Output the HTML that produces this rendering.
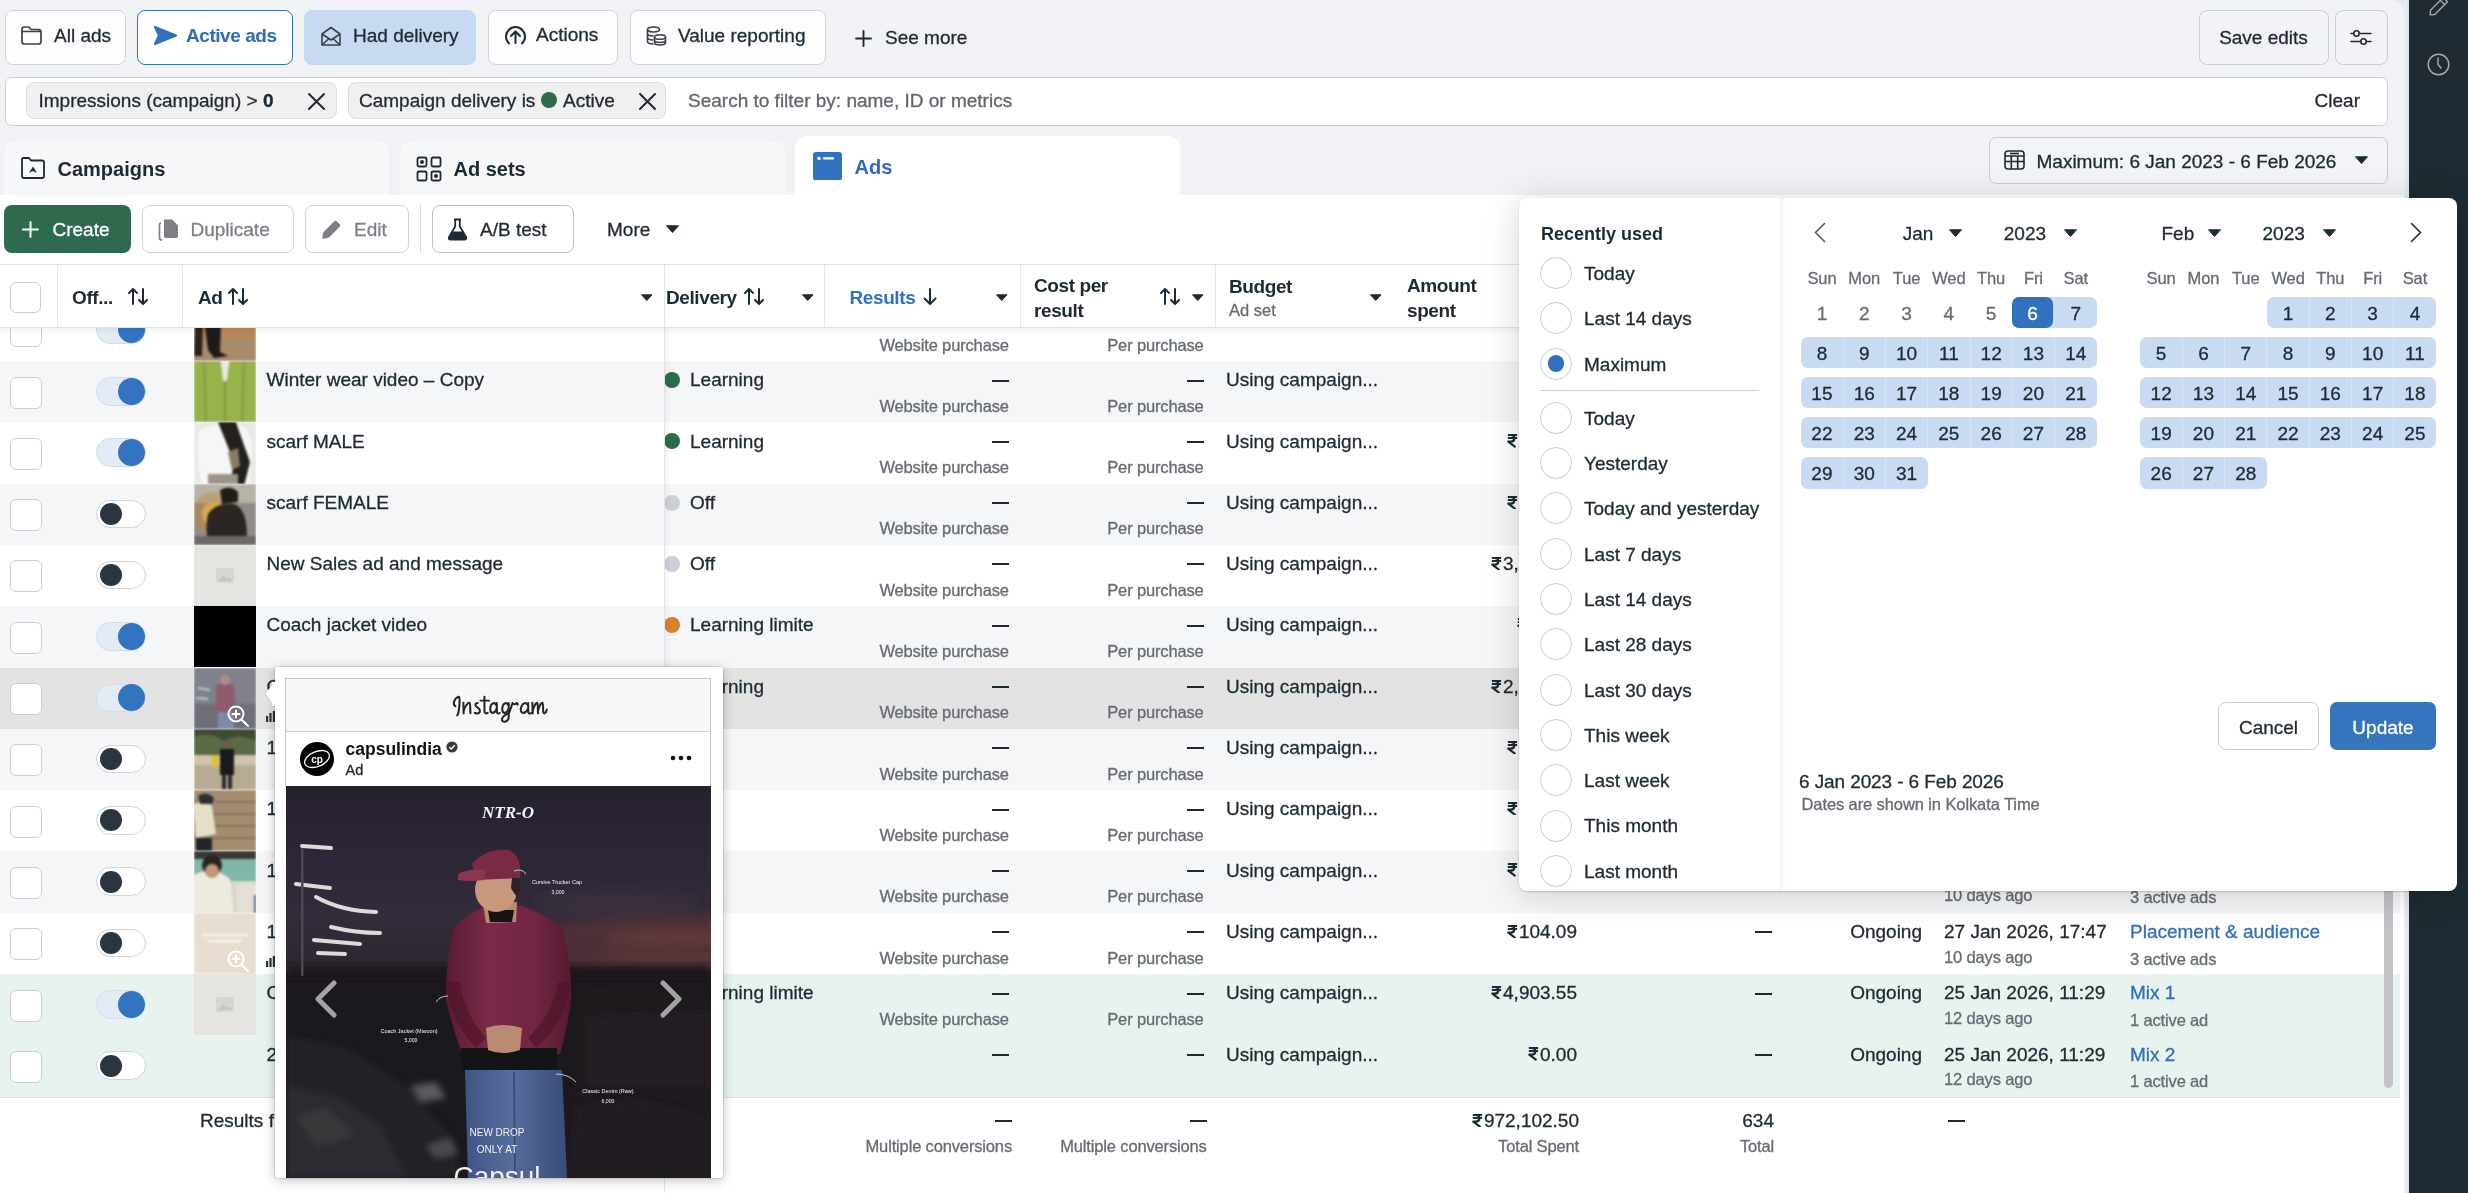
<!DOCTYPE html><html><head><meta charset="utf-8"><style>
*{box-sizing:border-box;margin:0;padding:0}
html,body{width:2468px;height:1193px;overflow:hidden}
body{position:relative;background:#f1f2f6;font-family:"Liberation Sans",sans-serif;color:#1c2b33}
.a{position:absolute}
.t{position:absolute;white-space:nowrap;-webkit-text-stroke:0.3px currentColor}
.btn{position:absolute;border:1px solid #cdd3da;border-radius:8px;background:#fff}
</style></head><body><div id="root" style="position:absolute;left:0;top:0;width:2468px;height:1193px;will-change:transform"><div class="btn" style="left:4.5px;top:10px;width:121px;height:55px;background:#fdfdfe"></div>
<svg class="a" style="left:20.00px;top:25.00px;" width="23" height="21" viewBox="0 0 23 21"><path d="M2 4.5 Q2 2 4.5 2 H9 L11 4.5 H18.5 Q21 4.5 21 7 V16.5 Q21 19 18.5 19 H4.5 Q2 19 2 16.5 Z M2 6.5 H21" fill="none" stroke="#37424a" stroke-width="1.7" stroke-linejoin="round"/></svg>
<div class="t" style="top:25.92px;font-size:19px;line-height:19px;color:#1c2b33;left:54.00px;">All ads</div>
<div class="btn" style="left:137px;top:10px;width:156px;height:55px;border:1.5px solid #3271bf;background:#fff"></div>
<svg class="a" style="left:153.00px;top:25.00px;" width="24" height="21" viewBox="0 0 24 21"><path d="M2 2 L23 10.5 L2 19 L6 10.5 Z" fill="#3271bf" stroke="#3271bf" stroke-width="2.2" stroke-linejoin="round"/></svg>
<div class="t" style="top:25.92px;font-size:19px;line-height:19px;color:#2f6cb8;font-weight:700;-webkit-text-stroke:0;letter-spacing:-0.45px;left:186.00px;">Active ads</div>
<div class="btn" style="left:304px;top:10px;width:172px;height:55px;background:#c7daf1;border-color:#c3d6ee"></div>
<svg class="a" style="left:320.00px;top:25.00px;" width="22" height="22" viewBox="0 0 22 22"><g fill="none" stroke="#37424a" stroke-width="1.6" stroke-linejoin="round"><path d="M2 9 L11 2.5 L20 9 V20 H2 Z"/><path d="M2 9 L11 15 L20 9 M2 20 L9 13.5 M20 20 L13 13.5"/></g></svg>
<div class="t" style="top:25.92px;font-size:19px;line-height:19px;color:#1c2b33;left:353.00px;">Had delivery</div>
<div class="btn" style="left:487.5px;top:10px;width:130px;height:55px;background:#fdfdfe"></div>
<svg class="a" style="left:503.00px;top:24.00px;" width="25" height="25" viewBox="0 0 25 25"><g fill="none" stroke="#1c2b33" stroke-width="2" stroke-linecap="round" stroke-linejoin="round"><path d="M6 19.5 A9.5 9.5 0 1 1 19 19.5"/><path d="M12.5 19 V7.5 M8 12 L12.5 7.5 L17 12"/></g></svg>
<div class="t" style="top:24.92px;font-size:19px;line-height:19px;color:#1c2b33;left:536.00px;">Actions</div>
<div class="btn" style="left:629.5px;top:10px;width:196px;height:55px;background:#fdfdfe"></div>
<svg class="a" style="left:646.00px;top:26.00px;" width="21" height="20" viewBox="0 0 21 20"><g fill="none" stroke="#37424a" stroke-width="1.6"><ellipse cx="7.5" cy="3.5" rx="6" ry="2.5"/><path d="M1.5 3.5 V15.5 Q1.5 18 7.5 18"/><path d="M1.5 7.5 Q1.5 10 7.5 10 M1.5 11.5 Q1.5 14 7.5 14"/><ellipse cx="14" cy="11" rx="5.5" ry="2.3"/><path d="M8.5 11 V16.5 Q8.5 19 14 19 Q19.5 19 19.5 16.5 V11 M8.5 14 Q8.5 16.5 14 16.5 Q19.5 16.5 19.5 14"/></g></svg>
<div class="t" style="top:25.92px;font-size:19px;line-height:19px;color:#1c2b33;left:678.00px;">Value reporting</div>
<svg class="a" style="left:854.00px;top:29.00px;" width="19" height="19" viewBox="0 0 19 19"><path d="M9.5 2 V17 M2 9.5 H17" stroke="#1c2b33" stroke-width="1.9" stroke-linecap="round"/></svg>
<div class="t" style="top:27.92px;font-size:19px;line-height:19px;color:#1c2b33;left:885.00px;">See more</div>
<div class="btn" style="left:2198.5px;top:10px;width:130px;height:55px;background:#f2f3f6;border-color:#c7ced6"></div>
<div class="t" style="top:27.92px;font-size:19px;line-height:19px;color:#1c2b33;left:1863.50px;width:800px;text-align:center;">Save edits</div>
<div class="btn" style="left:2335px;top:10px;width:53px;height:55px;background:#f2f3f6;border-color:#c7ced6"></div>
<svg class="a" style="left:2350.00px;top:29.00px;" width="22" height="17" viewBox="0 0 22 17"><g fill="none" stroke="#1c2b33" stroke-width="1.6" stroke-linecap="round"><path d="M1 4.5 H3 M10 4.5 H21"/><circle cx="6.5" cy="4.5" r="2.7"/><path d="M1 12.5 H10 M17 12.5 H21"/><circle cx="13.5" cy="12.5" r="2.7"/></g></svg>
<div class="a" style="left:4.5px;top:76.5px;width:2383px;height:49px;background:#fff;border:1px solid #c9ced6;border-radius:7px"></div>
<div class="a" style="left:26px;top:82px;width:310.5px;height:37px;background:#f0f0f1;border:1px solid #dadde1;border-radius:8px"></div>
<div class="t" style="top:91.22px;font-size:19px;line-height:19px;color:#1c2b33;left:38.50px;">Impressions (campaign) &gt; <b>0</b></div>
<svg class="a" style="left:307.00px;top:92.00px;" width="19" height="19" viewBox="0 0 19 19"><path d="M2 2 L17 17 M17 2 L2 17" stroke="#1c2b33" stroke-width="2" stroke-linecap="round"/></svg>
<div class="a" style="left:347.5px;top:82px;width:318px;height:37px;background:#f0f0f1;border:1px solid #dadde1;border-radius:8px"></div>
<div class="t" style="top:91.22px;font-size:19px;line-height:19px;color:#1c2b33;left:359.00px;">Campaign delivery is</div>
<div class="a" style="left:541.00px;top:92.00px;width:16.00px;height:16.00px;background:#2b6c4b;border-radius:50%"></div>
<div class="t" style="top:91.22px;font-size:19px;line-height:19px;color:#1c2b33;left:563.00px;">Active</div>
<svg class="a" style="left:637.50px;top:92.00px;" width="19" height="19" viewBox="0 0 19 19"><path d="M2 2 L17 17 M17 2 L2 17" stroke="#1c2b33" stroke-width="2" stroke-linecap="round"/></svg>
<div class="t" style="top:91.22px;font-size:19px;line-height:19px;color:#60676e;left:688.00px;">Search to filter by: name, ID or metrics</div>
<div class="t" style="top:91.22px;font-size:19px;line-height:19px;color:#1c2b33;left:1560.00px;width:800px;text-align:right;">Clear</div>
<div class="a" style="left:4px;top:141px;width:385px;height:60px;background:#f7f8fa;border-radius:12px 12px 0 0"></div>
<svg class="a" style="left:20.00px;top:156.00px;" width="26" height="24" viewBox="0 0 26 24"><g fill="none" stroke="#1c2b33" stroke-width="1.8" stroke-linejoin="round"><path d="M2 3.5 Q2 2 3.5 2 H9 L11 4.5 H22 Q24 4.5 24 6.5 V20 Q24 22 22 22 H4 Q2 22 2 20 Z"/></g><path d="M9 17 L13 10.5 L17 17 L13 15 Z" fill="#1c2b33"/></svg>
<div class="t" style="top:158.57px;font-size:20px;line-height:20px;color:#1c2b33;font-weight:700;-webkit-text-stroke:0;left:57.50px;">Campaigns</div>
<div class="a" style="left:400px;top:141px;width:385px;height:60px;background:#f7f8fa;border-radius:12px 12px 0 0"></div>
<svg class="a" style="left:416.00px;top:156.00px;" width="26" height="26" viewBox="0 0 26 26"><g fill="none" stroke="#1c2b33" stroke-width="1.8"><rect x="1.5" y="1.5" width="9" height="9" rx="1.5"/><rect x="15.5" y="1.5" width="9" height="9" rx="1.5"/><rect x="1.5" y="15.5" width="9" height="9" rx="1.5"/><rect x="15.5" y="15.5" width="9" height="9" rx="1.5"/></g><circle cx="6" cy="6" r="2" fill="#1c2b33"/><circle cx="20" cy="20" r="2" fill="#1c2b33"/></svg>
<div class="t" style="top:158.57px;font-size:20px;line-height:20px;color:#1c2b33;font-weight:700;-webkit-text-stroke:0;left:453.50px;">Ad sets</div>
<div class="a" style="left:795px;top:136px;width:385px;height:65px;background:#fff;border-radius:12px 12px 0 0"></div>
<svg class="a" style="left:812.50px;top:151.50px;" width="29" height="28.5" viewBox="0 0 29 28.5"><rect x="0" y="0" width="29" height="28.5" rx="3" fill="#3271bf"/><circle cx="6" cy="6.5" r="1.8" fill="#fff"/><rect x="10" y="5.2" width="11" height="2.4" rx="1" fill="#fff"/></svg>
<div class="t" style="top:156.57px;font-size:20px;line-height:20px;color:#2f6cb8;font-weight:700;-webkit-text-stroke:0;left:854.50px;">Ads</div>
<div class="a" style="left:1988.5px;top:136.5px;width:399px;height:47px;background:#f3f4f7;border:1px solid #c5ccd5;border-radius:7px"></div>
<svg class="a" style="left:2004.00px;top:150.00px;" width="21" height="20" viewBox="0 0 21 20"><g fill="none" stroke="#1c2b33" stroke-width="1.6"><rect x="1" y="1" width="19" height="18" rx="3"/><path d="M1 6 H20 M1 11.5 H20 M7.3 6 V19 M13.7 6 V19"/></g><path d="M6 3.5 H15" stroke="#1c2b33" stroke-width="1.6"/></svg>
<div class="t" style="top:151.92px;font-size:19px;line-height:19px;color:#1c2b33;left:2036.50px;">Maximum: 6 Jan 2023 - 6 Feb 2026</div>
<svg class="a" style="left:2354.50px;top:156.00px;" width="13" height="8" viewBox="0 0 13 8"><path d="M0.5 0.8 L12.5 0.8 L6.5 7.5 Z" fill="#1c2b33" stroke="#1c2b33" stroke-width="1" stroke-linejoin="round"/></svg>
<div class="a" style="left:2404.00px;top:0.00px;width:5.00px;height:1193.00px;background:linear-gradient(90deg,#e9edf4,#dfe5ef)"></div>
<div class="a" style="left:2392.00px;top:0.00px;width:12.00px;height:12.00px;background:linear-gradient(90deg,#e9edf4,#dfe5ef)"></div>
<div class="a" style="left:2390.00px;top:0.00px;width:14.00px;height:14.00px;background:#f1f2f6;border-top-right-radius:12px"></div>
<div class="a" style="left:2409.00px;top:0.00px;width:59.00px;height:1193.00px;background:#1f2a32"></div>
<svg class="a" style="left:2424.00px;top:-6.00px;" width="30" height="24" viewBox="0 0 30 24"><g transform="rotate(-45 15 12)"><path d="M6 9 H24 V15 H6 L2.5 12 Z M20 9 V15" fill="none" stroke="#a6a9ad" stroke-width="1.4" stroke-linejoin="round"/></g></svg>
<svg class="a" style="left:2427.00px;top:53.00px;" width="23" height="23" viewBox="0 0 23 23"><circle cx="11.5" cy="11.5" r="10.3" fill="none" stroke="#a6a9ad" stroke-width="1.5"/><path d="M11 5 V11.5 L14 15" fill="none" stroke="#a6a9ad" stroke-width="1.5" stroke-linecap="round"/></svg>
<div class="a" style="left:0;top:195px;width:2404px;height:998px;background:#fff;border-radius:0"></div>
<div class="a" style="left:4px;top:205px;width:127px;height:48px;background:#2d6a4e;border-radius:8px"></div>
<svg class="a" style="left:22.00px;top:221.00px;" width="17" height="17" viewBox="0 0 17 17"><path d="M8.5 1 V16 M1 8.5 H16" stroke="#fff" stroke-width="2" stroke-linecap="round"/></svg>
<div class="t" style="top:219.92px;font-size:19px;line-height:19px;color:#fff;left:52.50px;">Create</div>
<div class="btn" style="left:142px;top:205px;width:151.5px;height:48px;border-color:#d0d5db"></div>
<svg class="a" style="left:157.00px;top:218.00px;" width="24" height="23" viewBox="0 0 24 23"><path d="M4 5 Q2.5 5 2.5 7 V20 Q2.5 22 5 22" fill="none" stroke="#7b8086" stroke-width="1.7"/><path d="M7 1.5 H15 L21 7.5 V18 Q21 20 19 20 H9 Q7 20 7 18 Z" fill="#7b8086"/></svg>
<div class="t" style="top:219.92px;font-size:19px;line-height:19px;color:#7b8086;left:190.50px;">Duplicate</div>
<div class="btn" style="left:305px;top:205px;width:104px;height:48px;border-color:#d0d5db"></div>
<svg class="a" style="left:321.00px;top:219.00px;" width="21" height="21" viewBox="0 0 21 21"><path d="M2.5 18.5 L3.5 14 L14.5 3 L18 6.5 L7 17.5 Z" fill="#7b8086" stroke="#7b8086" stroke-width="2.6" stroke-linejoin="round"/></svg>
<div class="t" style="top:219.92px;font-size:19px;line-height:19px;color:#7b8086;left:354.00px;">Edit</div>
<div class="a" style="left:420.00px;top:205.00px;width:1.00px;height:48.00px;background:#d3d8dd"></div>
<div class="btn" style="left:432px;top:205px;width:142px;height:48px;border-color:#b9c0c8"></div>
<svg class="a" style="left:447.00px;top:218.00px;" width="21" height="23" viewBox="0 0 21 23"><path d="M7 1.5 H14 M8.2 1.5 V8.5 L2 19 Q1 21.5 3.8 21.5 H17.2 Q20 21.5 19 19 L12.8 8.5 V1.5" fill="none" stroke="#1c2b33" stroke-width="1.8" stroke-linejoin="round"/><path d="M5.5 13.5 H15.5 L19 19.5 Q19.8 21.5 17.5 21.5 H3.5 Q1.2 21.5 2 19.5 Z" fill="#1c2b33"/></svg>
<div class="t" style="top:219.92px;font-size:19px;line-height:19px;color:#1c2b33;left:480.00px;">A/B test</div>
<div class="t" style="top:219.92px;font-size:19px;line-height:19px;color:#1c2b33;left:607.00px;">More</div>
<svg class="a" style="left:666.00px;top:225.00px;" width="13" height="8" viewBox="0 0 13 8"><path d="M0.5 0.8 L12.5 0.8 L6.5 7.5 Z" fill="#1c2b33" stroke="#1c2b33" stroke-width="1" stroke-linejoin="round"/></svg>
<div class="a" style="left:0.00px;top:299.70px;width:2400.00px;height:62.00px;background:#ffffff"></div>
<div class="a" style="left:0.00px;top:361.00px;width:2400.00px;height:62.00px;background:#f5f6f8"></div>
<div class="a" style="left:0.00px;top:422.30px;width:2400.00px;height:62.00px;background:#ffffff"></div>
<div class="a" style="left:0.00px;top:483.60px;width:2400.00px;height:62.00px;background:#f5f6f8"></div>
<div class="a" style="left:0.00px;top:544.90px;width:2400.00px;height:62.00px;background:#ffffff"></div>
<div class="a" style="left:0.00px;top:606.20px;width:2400.00px;height:62.00px;background:#f5f6f8"></div>
<div class="a" style="left:0.00px;top:667.50px;width:2400.00px;height:62.00px;background:#e3e3e4"></div>
<div class="a" style="left:0.00px;top:728.80px;width:2400.00px;height:62.00px;background:#f5f6f8"></div>
<div class="a" style="left:0.00px;top:790.10px;width:2400.00px;height:62.00px;background:#ffffff"></div>
<div class="a" style="left:0.00px;top:851.40px;width:2400.00px;height:62.00px;background:#f5f6f8"></div>
<div class="a" style="left:0.00px;top:912.70px;width:2400.00px;height:62.00px;background:#ffffff"></div>
<div class="a" style="left:0.00px;top:974.00px;width:2400.00px;height:62.00px;background:#e8f3f0"></div>
<div class="a" style="left:0.00px;top:1035.30px;width:2400.00px;height:62.00px;background:#e8f3f0"></div>
<div class="a" style="left:10.00px;top:315.20px;width:32.00px;height:32.00px;background:#fff;border:1px solid #c9ced4;border-radius:6px"></div>
<div class="a" style="left:96.00px;top:315.70px;width:49.50px;height:28.50px;background:#e2ebf6;border:1px solid #d3dde9;border-radius:15px"></div>
<div class="a" style="left:118.00px;top:316.40px;width:27.00px;height:27.00px;background:#3373c0;border-radius:50%"></div>
<div class="a" style="left:194px;top:299.70px;width:62px;height:61.3px;overflow:hidden"><svg width="62" height="61.3" viewBox="0 0 62 61.3" preserveAspectRatio="none" style="display:block;filter:blur(1.3px)"><rect x="-5" y="-5" width="72" height="72" fill="#b5875a"/><rect x="-5" y="40" width="72" height="25" fill="#a88a6c"/><path d="M8 -5 L28 -5 L26 52 L34 56 L20 58 L14 50 L10 20 Z" fill="#1e1a18"/><path d="M2 -5 L10 -5 L8 56 L0 56 Z" fill="#2a221c"/></svg></div>
<div class="a" style="left:664.00px;top:310.70px;width:16.00px;height:16.00px;background:#2b6c4b;border-radius:50%"></div>
<div class="a" style="left:991.80px;top:318.20px;width:17.00px;height:2.00px;background:#1c2b33"></div>
<div class="t" style="top:336.53px;font-size:16.5px;line-height:16.5px;color:#656c74;letter-spacing:-0.15px;left:208.80px;width:800px;text-align:right;">Website purchase</div>
<div class="a" style="left:1186.60px;top:318.20px;width:17.00px;height:2.00px;background:#1c2b33"></div>
<div class="t" style="top:336.53px;font-size:16.5px;line-height:16.5px;color:#656c74;letter-spacing:-0.15px;left:403.60px;width:800px;text-align:right;">Per purchase</div>
<div class="t" style="top:308.92px;font-size:19px;line-height:19px;color:#1c2b33;left:777.00px;width:800px;text-align:right;">1,276.41</div>
<svg class="a" style="left:1491.06px;top:311.70px;" width="10.64" height="13.3" viewBox="0 0 10.64 13.3"><g fill="none" stroke="#1c2b33" stroke-width="2.19" stroke-linejoin="round"><path d="M0.8512000000000001 0.798 H10.108 M0.8512000000000001 3.99 H10.108"/><path d="M1.064 0.798 H3.7239999999999998 C8.512 0.798 8.512 7.7139999999999995 3.7239999999999998 7.7139999999999995 H1.2768 L8.512 13.034"/></g></svg>
<div class="a" style="left:1755.00px;top:318.20px;width:17.00px;height:2.00px;background:#1c2b33"></div>
<div class="t" style="top:308.92px;font-size:19px;line-height:19px;color:#1c2b33;left:1122.00px;width:800px;text-align:right;">Ongoing</div>
<div class="t" style="top:308.92px;font-size:19px;line-height:19px;color:#1c2b33;left:1944.00px;">27 Jan 2026, 17:47</div>
<div class="t" style="top:335.53px;font-size:16.5px;line-height:16.5px;color:#656c74;letter-spacing:-0.15px;left:1944.00px;">10 days ago</div>
<div class="t" style="top:308.92px;font-size:19px;line-height:19px;color:#2f6fbd;left:2130.00px;">Placement &amp; audience</div>
<div class="t" style="top:337.53px;font-size:16.5px;line-height:16.5px;color:#656c74;letter-spacing:-0.15px;left:2130.00px;">3 active ads</div>
<div class="a" style="left:10.00px;top:376.50px;width:32.00px;height:32.00px;background:#fff;border:1px solid #c9ced4;border-radius:6px"></div>
<div class="a" style="left:96.00px;top:377.00px;width:49.50px;height:28.50px;background:#e2ebf6;border:1px solid #d3dde9;border-radius:15px"></div>
<div class="a" style="left:118.00px;top:377.70px;width:27.00px;height:27.00px;background:#3373c0;border-radius:50%"></div>
<div class="a" style="left:194px;top:361.00px;width:62px;height:61.3px;overflow:hidden"><svg width="62" height="61.3" viewBox="0 0 62 61.3" preserveAspectRatio="none" style="display:block;filter:blur(1.3px)"><rect x="-5" y="-5" width="72" height="72" fill="#98b24c"/><path d="M26 -5 L36 -5 L33 20 L29 20 Z" fill="#e8eadf"/><path d="M31 20 L31 66" stroke="#7f9a3c" stroke-width="2"/><path d="M10 -5 L12 66 M50 -5 L48 66" stroke="#88a444" stroke-width="3"/></svg></div>
<div class="t" style="top:370.22px;font-size:19px;line-height:19px;color:#1c2b33;left:266.50px;">Winter wear video – Copy</div>
<div class="a" style="left:664.00px;top:372.00px;width:16.00px;height:16.00px;background:#2b6c4b;border-radius:50%"></div>
<div class="t" style="top:370.22px;font-size:19px;line-height:19px;color:#1c2b33;left:690.00px;">Learning</div>
<div class="a" style="left:991.80px;top:379.50px;width:17.00px;height:2.00px;background:#1c2b33"></div>
<div class="t" style="top:397.83px;font-size:16.5px;line-height:16.5px;color:#656c74;letter-spacing:-0.15px;left:208.80px;width:800px;text-align:right;">Website purchase</div>
<div class="a" style="left:1186.60px;top:379.50px;width:17.00px;height:2.00px;background:#1c2b33"></div>
<div class="t" style="top:397.83px;font-size:16.5px;line-height:16.5px;color:#656c74;letter-spacing:-0.15px;left:403.60px;width:800px;text-align:right;">Per purchase</div>
<div class="t" style="top:370.22px;font-size:19px;line-height:19px;color:#1c2b33;left:1226.00px;">Using campaign...</div>
<div class="t" style="top:370.22px;font-size:19px;line-height:19px;color:#1c2b33;left:777.00px;width:800px;text-align:right;">7.10</div>
<svg class="a" style="left:1528.03px;top:373.00px;" width="10.64" height="13.3" viewBox="0 0 10.64 13.3"><g fill="none" stroke="#1c2b33" stroke-width="2.19" stroke-linejoin="round"><path d="M0.8512000000000001 0.798 H10.108 M0.8512000000000001 3.99 H10.108"/><path d="M1.064 0.798 H3.7239999999999998 C8.512 0.798 8.512 7.7139999999999995 3.7239999999999998 7.7139999999999995 H1.2768 L8.512 13.034"/></g></svg>
<div class="a" style="left:1755.00px;top:379.50px;width:17.00px;height:2.00px;background:#1c2b33"></div>
<div class="t" style="top:370.22px;font-size:19px;line-height:19px;color:#1c2b33;left:1122.00px;width:800px;text-align:right;">Ongoing</div>
<div class="t" style="top:370.22px;font-size:19px;line-height:19px;color:#1c2b33;left:1944.00px;">27 Jan 2026, 17:47</div>
<div class="t" style="top:396.83px;font-size:16.5px;line-height:16.5px;color:#656c74;letter-spacing:-0.15px;left:1944.00px;">10 days ago</div>
<div class="t" style="top:370.22px;font-size:19px;line-height:19px;color:#2f6fbd;left:2130.00px;">Placement &amp; audience</div>
<div class="t" style="top:398.83px;font-size:16.5px;line-height:16.5px;color:#656c74;letter-spacing:-0.15px;left:2130.00px;">3 active ads</div>
<div class="a" style="left:10.00px;top:437.80px;width:32.00px;height:32.00px;background:#fff;border:1px solid #c9ced4;border-radius:6px"></div>
<div class="a" style="left:96.00px;top:438.30px;width:49.50px;height:28.50px;background:#e2ebf6;border:1px solid #d3dde9;border-radius:15px"></div>
<div class="a" style="left:118.00px;top:439.00px;width:27.00px;height:27.00px;background:#3373c0;border-radius:50%"></div>
<div class="a" style="left:194px;top:422.30px;width:62px;height:61.3px;overflow:hidden"><svg width="62" height="61.3" viewBox="0 0 62 61.3" preserveAspectRatio="none" style="display:block;filter:blur(1.3px)"><rect x="-5" y="-5" width="72" height="72" fill="#e9e9e7"/><path d="M4 10 Q14 2 30 2 L48 4 Q58 10 58 30 L56 64 L8 64 Q2 40 4 10 Z" fill="#f6f6f4"/><path d="M22 -5 L40 -5 L56 40 L50 64 L36 64 L40 40 Z" fill="#23201e"/><path d="M34 30 L44 26 L46 44 L38 48 Z" fill="#8a7a62"/><rect x="14" y="52" width="30" height="12" fill="#9a948a"/></svg></div>
<div class="t" style="top:431.52px;font-size:19px;line-height:19px;color:#1c2b33;left:266.50px;">scarf MALE</div>
<div class="a" style="left:664.00px;top:433.30px;width:16.00px;height:16.00px;background:#2b6c4b;border-radius:50%"></div>
<div class="t" style="top:431.52px;font-size:19px;line-height:19px;color:#1c2b33;left:690.00px;">Learning</div>
<div class="a" style="left:991.80px;top:440.80px;width:17.00px;height:2.00px;background:#1c2b33"></div>
<div class="t" style="top:459.13px;font-size:16.5px;line-height:16.5px;color:#656c74;letter-spacing:-0.15px;left:208.80px;width:800px;text-align:right;">Website purchase</div>
<div class="a" style="left:1186.60px;top:440.80px;width:17.00px;height:2.00px;background:#1c2b33"></div>
<div class="t" style="top:459.13px;font-size:16.5px;line-height:16.5px;color:#656c74;letter-spacing:-0.15px;left:403.60px;width:800px;text-align:right;">Per purchase</div>
<div class="t" style="top:431.52px;font-size:19px;line-height:19px;color:#1c2b33;left:1226.00px;">Using campaign...</div>
<div class="t" style="top:431.52px;font-size:19px;line-height:19px;color:#1c2b33;left:777.00px;width:800px;text-align:right;">652.03</div>
<svg class="a" style="left:1506.91px;top:434.30px;" width="10.64" height="13.3" viewBox="0 0 10.64 13.3"><g fill="none" stroke="#1c2b33" stroke-width="2.19" stroke-linejoin="round"><path d="M0.8512000000000001 0.798 H10.108 M0.8512000000000001 3.99 H10.108"/><path d="M1.064 0.798 H3.7239999999999998 C8.512 0.798 8.512 7.7139999999999995 3.7239999999999998 7.7139999999999995 H1.2768 L8.512 13.034"/></g></svg>
<div class="a" style="left:1755.00px;top:440.80px;width:17.00px;height:2.00px;background:#1c2b33"></div>
<div class="t" style="top:431.52px;font-size:19px;line-height:19px;color:#1c2b33;left:1122.00px;width:800px;text-align:right;">Ongoing</div>
<div class="t" style="top:431.52px;font-size:19px;line-height:19px;color:#1c2b33;left:1944.00px;">27 Jan 2026, 17:47</div>
<div class="t" style="top:458.13px;font-size:16.5px;line-height:16.5px;color:#656c74;letter-spacing:-0.15px;left:1944.00px;">10 days ago</div>
<div class="t" style="top:431.52px;font-size:19px;line-height:19px;color:#2f6fbd;left:2130.00px;">Placement &amp; audience</div>
<div class="t" style="top:460.13px;font-size:16.5px;line-height:16.5px;color:#656c74;letter-spacing:-0.15px;left:2130.00px;">3 active ads</div>
<div class="a" style="left:10.00px;top:499.10px;width:32.00px;height:32.00px;background:#fff;border:1px solid #c9ced4;border-radius:6px"></div>
<div class="a" style="left:96.00px;top:499.60px;width:49.50px;height:28.50px;background:#fff;border:1px solid #d0d4da;border-radius:15px"></div>
<div class="a" style="left:99.50px;top:502.90px;width:22.00px;height:22.00px;background:#2b3640;border-radius:50%"></div>
<div class="a" style="left:194px;top:483.60px;width:62px;height:61.3px;overflow:hidden"><svg width="62" height="61.3" viewBox="0 0 62 61.3" preserveAspectRatio="none" style="display:block;filter:blur(1.3px)"><rect x="-5" y="-5" width="72" height="72" fill="#8e8c86"/><rect x="-5" y="-5" width="72" height="24" fill="#b9b3a6"/><circle cx="20" cy="30" r="12" fill="#f0c060"/><circle cx="20" cy="30" r="22" fill="#c08a3a" opacity="0.45"/><path d="M26 6 Q36 0 44 8 L44 18 L28 20 Z" fill="#221c18"/><path d="M14 30 Q22 18 40 20 Q56 26 52 64 L16 64 Q10 48 14 30 Z" fill="#2b2622"/><rect x="-5" y="52" width="72" height="12" fill="#6d6a66"/></svg></div>
<div class="t" style="top:492.82px;font-size:19px;line-height:19px;color:#1c2b33;left:266.50px;">scarf FEMALE</div>
<div class="a" style="left:664.00px;top:494.60px;width:16.00px;height:16.00px;background:#cbd0d6;border-radius:50%"></div>
<div class="t" style="top:492.82px;font-size:19px;line-height:19px;color:#1c2b33;left:690.00px;">Off</div>
<div class="a" style="left:991.80px;top:502.10px;width:17.00px;height:2.00px;background:#1c2b33"></div>
<div class="t" style="top:520.43px;font-size:16.5px;line-height:16.5px;color:#656c74;letter-spacing:-0.15px;left:208.80px;width:800px;text-align:right;">Website purchase</div>
<div class="a" style="left:1186.60px;top:502.10px;width:17.00px;height:2.00px;background:#1c2b33"></div>
<div class="t" style="top:520.43px;font-size:16.5px;line-height:16.5px;color:#656c74;letter-spacing:-0.15px;left:403.60px;width:800px;text-align:right;">Per purchase</div>
<div class="t" style="top:492.82px;font-size:19px;line-height:19px;color:#1c2b33;left:1226.00px;">Using campaign...</div>
<div class="t" style="top:492.82px;font-size:19px;line-height:19px;color:#1c2b33;left:777.00px;width:800px;text-align:right;">637.90</div>
<svg class="a" style="left:1506.91px;top:495.60px;" width="10.64" height="13.3" viewBox="0 0 10.64 13.3"><g fill="none" stroke="#1c2b33" stroke-width="2.19" stroke-linejoin="round"><path d="M0.8512000000000001 0.798 H10.108 M0.8512000000000001 3.99 H10.108"/><path d="M1.064 0.798 H3.7239999999999998 C8.512 0.798 8.512 7.7139999999999995 3.7239999999999998 7.7139999999999995 H1.2768 L8.512 13.034"/></g></svg>
<div class="a" style="left:1755.00px;top:502.10px;width:17.00px;height:2.00px;background:#1c2b33"></div>
<div class="t" style="top:492.82px;font-size:19px;line-height:19px;color:#1c2b33;left:1122.00px;width:800px;text-align:right;">Ongoing</div>
<div class="t" style="top:492.82px;font-size:19px;line-height:19px;color:#1c2b33;left:1944.00px;">27 Jan 2026, 17:47</div>
<div class="t" style="top:519.43px;font-size:16.5px;line-height:16.5px;color:#656c74;letter-spacing:-0.15px;left:1944.00px;">10 days ago</div>
<div class="t" style="top:492.82px;font-size:19px;line-height:19px;color:#2f6fbd;left:2130.00px;">Placement &amp; audience</div>
<div class="t" style="top:521.43px;font-size:16.5px;line-height:16.5px;color:#656c74;letter-spacing:-0.15px;left:2130.00px;">3 active ads</div>
<div class="a" style="left:10.00px;top:560.40px;width:32.00px;height:32.00px;background:#fff;border:1px solid #c9ced4;border-radius:6px"></div>
<div class="a" style="left:96.00px;top:560.90px;width:49.50px;height:28.50px;background:#fff;border:1px solid #d0d4da;border-radius:15px"></div>
<div class="a" style="left:99.50px;top:564.20px;width:22.00px;height:22.00px;background:#2b3640;border-radius:50%"></div>
<div class="a" style="left:194px;top:544.90px;width:62px;height:61.3px;overflow:hidden"><div style="width:62px;height:61.3px;background:#e6e4e1"></div></div>
<svg class="a" style="left:215.00px;top:566.90px;" width="20" height="17" viewBox="0 0 20 17"><rect x="1" y="1" width="18" height="15" rx="2" fill="#d7d5d2"/><path d="M3 14 L8 8 L12 12 L14 10 L17 14 Z" fill="#c8c6c3"/></svg>
<div class="t" style="top:554.12px;font-size:19px;line-height:19px;color:#1c2b33;left:266.50px;">New Sales ad and message</div>
<div class="a" style="left:664.00px;top:555.90px;width:16.00px;height:16.00px;background:#cbd0d6;border-radius:50%"></div>
<div class="t" style="top:554.12px;font-size:19px;line-height:19px;color:#1c2b33;left:690.00px;">Off</div>
<div class="a" style="left:991.80px;top:563.40px;width:17.00px;height:2.00px;background:#1c2b33"></div>
<div class="t" style="top:581.73px;font-size:16.5px;line-height:16.5px;color:#656c74;letter-spacing:-0.15px;left:208.80px;width:800px;text-align:right;">Website purchase</div>
<div class="a" style="left:1186.60px;top:563.40px;width:17.00px;height:2.00px;background:#1c2b33"></div>
<div class="t" style="top:581.73px;font-size:16.5px;line-height:16.5px;color:#656c74;letter-spacing:-0.15px;left:403.60px;width:800px;text-align:right;">Per purchase</div>
<div class="t" style="top:554.12px;font-size:19px;line-height:19px;color:#1c2b33;left:1226.00px;">Using campaign...</div>
<div class="t" style="top:554.12px;font-size:19px;line-height:19px;color:#1c2b33;left:777.00px;width:800px;text-align:right;">3,270.44</div>
<svg class="a" style="left:1491.06px;top:556.90px;" width="10.64" height="13.3" viewBox="0 0 10.64 13.3"><g fill="none" stroke="#1c2b33" stroke-width="2.19" stroke-linejoin="round"><path d="M0.8512000000000001 0.798 H10.108 M0.8512000000000001 3.99 H10.108"/><path d="M1.064 0.798 H3.7239999999999998 C8.512 0.798 8.512 7.7139999999999995 3.7239999999999998 7.7139999999999995 H1.2768 L8.512 13.034"/></g></svg>
<div class="a" style="left:1755.00px;top:563.40px;width:17.00px;height:2.00px;background:#1c2b33"></div>
<div class="t" style="top:554.12px;font-size:19px;line-height:19px;color:#1c2b33;left:1122.00px;width:800px;text-align:right;">Ongoing</div>
<div class="t" style="top:554.12px;font-size:19px;line-height:19px;color:#1c2b33;left:1944.00px;">27 Jan 2026, 17:47</div>
<div class="t" style="top:580.73px;font-size:16.5px;line-height:16.5px;color:#656c74;letter-spacing:-0.15px;left:1944.00px;">10 days ago</div>
<div class="t" style="top:554.12px;font-size:19px;line-height:19px;color:#2f6fbd;left:2130.00px;">Placement &amp; audience</div>
<div class="t" style="top:582.73px;font-size:16.5px;line-height:16.5px;color:#656c74;letter-spacing:-0.15px;left:2130.00px;">3 active ads</div>
<div class="a" style="left:10.00px;top:621.70px;width:32.00px;height:32.00px;background:#fff;border:1px solid #c9ced4;border-radius:6px"></div>
<div class="a" style="left:96.00px;top:622.20px;width:49.50px;height:28.50px;background:#e2ebf6;border:1px solid #d3dde9;border-radius:15px"></div>
<div class="a" style="left:118.00px;top:622.90px;width:27.00px;height:27.00px;background:#3373c0;border-radius:50%"></div>
<div class="a" style="left:194px;top:606.20px;width:62px;height:61.3px;overflow:hidden"><div style="width:62px;height:61.3px;background:#000"></div></div>
<div class="t" style="top:615.42px;font-size:19px;line-height:19px;color:#1c2b33;left:266.50px;">Coach jacket video</div>
<div class="a" style="left:664.00px;top:617.20px;width:16.00px;height:16.00px;background:#d9802b;border-radius:50%"></div>
<div class="t" style="top:615.42px;font-size:19px;line-height:19px;color:#1c2b33;left:690.00px;">Learning limite</div>
<div class="a" style="left:991.80px;top:624.70px;width:17.00px;height:2.00px;background:#1c2b33"></div>
<div class="t" style="top:643.03px;font-size:16.5px;line-height:16.5px;color:#656c74;letter-spacing:-0.15px;left:208.80px;width:800px;text-align:right;">Website purchase</div>
<div class="a" style="left:1186.60px;top:624.70px;width:17.00px;height:2.00px;background:#1c2b33"></div>
<div class="t" style="top:643.03px;font-size:16.5px;line-height:16.5px;color:#656c74;letter-spacing:-0.15px;left:403.60px;width:800px;text-align:right;">Per purchase</div>
<div class="t" style="top:615.42px;font-size:19px;line-height:19px;color:#1c2b33;left:1226.00px;">Using campaign...</div>
<div class="t" style="top:615.42px;font-size:19px;line-height:19px;color:#1c2b33;left:777.00px;width:800px;text-align:right;">19.90</div>
<svg class="a" style="left:1517.47px;top:618.20px;" width="10.64" height="13.3" viewBox="0 0 10.64 13.3"><g fill="none" stroke="#1c2b33" stroke-width="2.19" stroke-linejoin="round"><path d="M0.8512000000000001 0.798 H10.108 M0.8512000000000001 3.99 H10.108"/><path d="M1.064 0.798 H3.7239999999999998 C8.512 0.798 8.512 7.7139999999999995 3.7239999999999998 7.7139999999999995 H1.2768 L8.512 13.034"/></g></svg>
<div class="a" style="left:1755.00px;top:624.70px;width:17.00px;height:2.00px;background:#1c2b33"></div>
<div class="t" style="top:615.42px;font-size:19px;line-height:19px;color:#1c2b33;left:1122.00px;width:800px;text-align:right;">Ongoing</div>
<div class="t" style="top:615.42px;font-size:19px;line-height:19px;color:#1c2b33;left:1944.00px;">27 Jan 2026, 17:47</div>
<div class="t" style="top:642.03px;font-size:16.5px;line-height:16.5px;color:#656c74;letter-spacing:-0.15px;left:1944.00px;">10 days ago</div>
<div class="t" style="top:615.42px;font-size:19px;line-height:19px;color:#2f6fbd;left:2130.00px;">Placement &amp; audience</div>
<div class="t" style="top:644.03px;font-size:16.5px;line-height:16.5px;color:#656c74;letter-spacing:-0.15px;left:2130.00px;">3 active ads</div>
<div class="a" style="left:10.00px;top:683.00px;width:32.00px;height:32.00px;background:#fff;border:1px solid #c9ced4;border-radius:6px"></div>
<div class="a" style="left:96.00px;top:683.50px;width:49.50px;height:28.50px;background:#e2ebf6;border:1px solid #d3dde9;border-radius:15px"></div>
<div class="a" style="left:118.00px;top:684.20px;width:27.00px;height:27.00px;background:#3373c0;border-radius:50%"></div>
<div class="a" style="left:194px;top:667.50px;width:62px;height:61.3px;overflow:hidden"><svg width="62" height="61.3" viewBox="0 0 62 61.3" preserveAspectRatio="none" style="display:block;filter:blur(1.3px)"><rect x="-5" y="-5" width="72" height="72" fill="#7f818c"/><rect x="-5" y="36" width="72" height="30" fill="#6e6f78"/><path d="M22 18 Q30 12 40 18 L42 44 L22 44 Z" fill="#8e5a6e"/><circle cx="31" cy="12" r="5" fill="#a89088"/><rect x="24" y="44" width="16" height="20" fill="#7d8aa8"/><path d="M4 20 L16 22 M2 30 L14 31" stroke="#c8c8cc" stroke-width="2"/></svg></div>
<svg class="a" style="left:226.00px;top:703.50px;" width="24" height="24" viewBox="0 0 24 24"><circle cx="10" cy="10" r="7.5" fill="none" stroke="#fff" stroke-width="2"/><path d="M10 6.5 V13.5 M6.5 10 H13.5 M15.5 15.5 L22 22" stroke="#fff" stroke-width="2" stroke-linecap="round"/></svg>
<svg class="a" style="left:266.00px;top:710.50px;" width="9" height="11" viewBox="0 0 9 11"><rect x="0" y="5" width="2.2" height="6" fill="#2b3640"/><rect x="3.4" y="2" width="2.2" height="9" fill="#2b3640"/><rect x="6.8" y="0" width="2.2" height="11" fill="#2b3640"/></svg>
<div class="t" style="top:676.72px;font-size:19px;line-height:19px;color:#1c2b33;left:266.50px;">Coach jacket carousel</div>
<div class="a" style="left:664.00px;top:678.50px;width:16.00px;height:16.00px;background:#2b6c4b;border-radius:50%"></div>
<div class="t" style="top:676.72px;font-size:19px;line-height:19px;color:#1c2b33;left:690.00px;">Learning</div>
<div class="a" style="left:991.80px;top:686.00px;width:17.00px;height:2.00px;background:#1c2b33"></div>
<div class="t" style="top:704.33px;font-size:16.5px;line-height:16.5px;color:#656c74;letter-spacing:-0.15px;left:208.80px;width:800px;text-align:right;">Website purchase</div>
<div class="a" style="left:1186.60px;top:686.00px;width:17.00px;height:2.00px;background:#1c2b33"></div>
<div class="t" style="top:704.33px;font-size:16.5px;line-height:16.5px;color:#656c74;letter-spacing:-0.15px;left:403.60px;width:800px;text-align:right;">Per purchase</div>
<div class="t" style="top:676.72px;font-size:19px;line-height:19px;color:#1c2b33;left:1226.00px;">Using campaign...</div>
<div class="t" style="top:676.72px;font-size:19px;line-height:19px;color:#1c2b33;left:777.00px;width:800px;text-align:right;">2,045.67</div>
<svg class="a" style="left:1491.06px;top:679.50px;" width="10.64" height="13.3" viewBox="0 0 10.64 13.3"><g fill="none" stroke="#1c2b33" stroke-width="2.19" stroke-linejoin="round"><path d="M0.8512000000000001 0.798 H10.108 M0.8512000000000001 3.99 H10.108"/><path d="M1.064 0.798 H3.7239999999999998 C8.512 0.798 8.512 7.7139999999999995 3.7239999999999998 7.7139999999999995 H1.2768 L8.512 13.034"/></g></svg>
<div class="a" style="left:1755.00px;top:686.00px;width:17.00px;height:2.00px;background:#1c2b33"></div>
<div class="t" style="top:676.72px;font-size:19px;line-height:19px;color:#1c2b33;left:1122.00px;width:800px;text-align:right;">Ongoing</div>
<div class="t" style="top:676.72px;font-size:19px;line-height:19px;color:#1c2b33;left:1944.00px;">27 Jan 2026, 17:47</div>
<div class="t" style="top:703.33px;font-size:16.5px;line-height:16.5px;color:#656c74;letter-spacing:-0.15px;left:1944.00px;">10 days ago</div>
<div class="t" style="top:676.72px;font-size:19px;line-height:19px;color:#2f6fbd;left:2130.00px;">Placement &amp; audience</div>
<div class="t" style="top:705.33px;font-size:16.5px;line-height:16.5px;color:#656c74;letter-spacing:-0.15px;left:2130.00px;">3 active ads</div>
<div class="a" style="left:10.00px;top:744.30px;width:32.00px;height:32.00px;background:#fff;border:1px solid #c9ced4;border-radius:6px"></div>
<div class="a" style="left:96.00px;top:744.80px;width:49.50px;height:28.50px;background:#fff;border:1px solid #d0d4da;border-radius:15px"></div>
<div class="a" style="left:99.50px;top:748.10px;width:22.00px;height:22.00px;background:#2b3640;border-radius:50%"></div>
<div class="a" style="left:194px;top:728.80px;width:62px;height:61.3px;overflow:hidden"><svg width="62" height="61.3" viewBox="0 0 62 61.3" preserveAspectRatio="none" style="display:block;filter:blur(1.3px)"><rect x="-5" y="-5" width="72" height="72" fill="#b8ab94"/><rect x="-5" y="-5" width="72" height="30" fill="#3f4a32"/><path d="M-5 10 Q15 0 30 12 Q45 2 67 14 L67 26 L-5 26 Z" fill="#5a6a44"/><rect x="-5" y="26" width="72" height="10" fill="#d0c4ac"/><path d="M26 20 L40 20 L40 46 L26 46 Z" fill="#1a1a1c"/><rect x="28" y="46" width="4" height="14" fill="#2a2a2c"/><rect x="34" y="46" width="4" height="14" fill="#2a2a2c"/><circle cx="33" cy="15" r="4" fill="#6a5a4a"/><rect x="18" y="26" width="6" height="12" fill="#e0c030"/></svg></div>
<div class="t" style="top:738.02px;font-size:19px;line-height:19px;color:#1c2b33;left:266.50px;">15 Jan drop video</div>
<div class="a" style="left:664.00px;top:739.80px;width:16.00px;height:16.00px;background:#cbd0d6;border-radius:50%"></div>
<div class="t" style="top:738.02px;font-size:19px;line-height:19px;color:#1c2b33;left:690.00px;">Off</div>
<div class="a" style="left:991.80px;top:747.30px;width:17.00px;height:2.00px;background:#1c2b33"></div>
<div class="t" style="top:765.63px;font-size:16.5px;line-height:16.5px;color:#656c74;letter-spacing:-0.15px;left:208.80px;width:800px;text-align:right;">Website purchase</div>
<div class="a" style="left:1186.60px;top:747.30px;width:17.00px;height:2.00px;background:#1c2b33"></div>
<div class="t" style="top:765.63px;font-size:16.5px;line-height:16.5px;color:#656c74;letter-spacing:-0.15px;left:403.60px;width:800px;text-align:right;">Per purchase</div>
<div class="t" style="top:738.02px;font-size:19px;line-height:19px;color:#1c2b33;left:1226.00px;">Using campaign...</div>
<div class="t" style="top:738.02px;font-size:19px;line-height:19px;color:#1c2b33;left:777.00px;width:800px;text-align:right;">412.80</div>
<svg class="a" style="left:1506.91px;top:740.80px;" width="10.64" height="13.3" viewBox="0 0 10.64 13.3"><g fill="none" stroke="#1c2b33" stroke-width="2.19" stroke-linejoin="round"><path d="M0.8512000000000001 0.798 H10.108 M0.8512000000000001 3.99 H10.108"/><path d="M1.064 0.798 H3.7239999999999998 C8.512 0.798 8.512 7.7139999999999995 3.7239999999999998 7.7139999999999995 H1.2768 L8.512 13.034"/></g></svg>
<div class="a" style="left:1755.00px;top:747.30px;width:17.00px;height:2.00px;background:#1c2b33"></div>
<div class="t" style="top:738.02px;font-size:19px;line-height:19px;color:#1c2b33;left:1122.00px;width:800px;text-align:right;">Ongoing</div>
<div class="t" style="top:738.02px;font-size:19px;line-height:19px;color:#1c2b33;left:1944.00px;">27 Jan 2026, 17:47</div>
<div class="t" style="top:764.63px;font-size:16.5px;line-height:16.5px;color:#656c74;letter-spacing:-0.15px;left:1944.00px;">10 days ago</div>
<div class="t" style="top:738.02px;font-size:19px;line-height:19px;color:#2f6fbd;left:2130.00px;">Placement &amp; audience</div>
<div class="t" style="top:766.63px;font-size:16.5px;line-height:16.5px;color:#656c74;letter-spacing:-0.15px;left:2130.00px;">3 active ads</div>
<div class="a" style="left:10.00px;top:805.60px;width:32.00px;height:32.00px;background:#fff;border:1px solid #c9ced4;border-radius:6px"></div>
<div class="a" style="left:96.00px;top:806.10px;width:49.50px;height:28.50px;background:#fff;border:1px solid #d0d4da;border-radius:15px"></div>
<div class="a" style="left:99.50px;top:809.40px;width:22.00px;height:22.00px;background:#2b3640;border-radius:50%"></div>
<div class="a" style="left:194px;top:790.10px;width:62px;height:61.3px;overflow:hidden"><svg width="62" height="61.3" viewBox="0 0 62 61.3" preserveAspectRatio="none" style="display:block;filter:blur(1.3px)"><rect x="-5" y="-5" width="72" height="72" fill="#a38c70"/><path d="M-5 12 H67 M-5 24 H67 M-5 36 H67 M-5 48 H67" stroke="#8a7258" stroke-width="2"/><path d="M0 14 Q10 8 18 16 L22 44 L2 48 Z" fill="#e8e0c6"/><path d="M4 6 Q12 0 20 8 L18 14 L6 14 Z" fill="#2a3038"/><rect x="2" y="48" width="16" height="14" fill="#22262c"/></svg></div>
<div class="t" style="top:799.32px;font-size:19px;line-height:19px;color:#1c2b33;left:266.50px;">13 Jan stairs video</div>
<div class="a" style="left:664.00px;top:801.10px;width:16.00px;height:16.00px;background:#cbd0d6;border-radius:50%"></div>
<div class="t" style="top:799.32px;font-size:19px;line-height:19px;color:#1c2b33;left:690.00px;">Off</div>
<div class="a" style="left:991.80px;top:808.60px;width:17.00px;height:2.00px;background:#1c2b33"></div>
<div class="t" style="top:826.93px;font-size:16.5px;line-height:16.5px;color:#656c74;letter-spacing:-0.15px;left:208.80px;width:800px;text-align:right;">Website purchase</div>
<div class="a" style="left:1186.60px;top:808.60px;width:17.00px;height:2.00px;background:#1c2b33"></div>
<div class="t" style="top:826.93px;font-size:16.5px;line-height:16.5px;color:#656c74;letter-spacing:-0.15px;left:403.60px;width:800px;text-align:right;">Per purchase</div>
<div class="t" style="top:799.32px;font-size:19px;line-height:19px;color:#1c2b33;left:1226.00px;">Using campaign...</div>
<div class="t" style="top:799.32px;font-size:19px;line-height:19px;color:#1c2b33;left:777.00px;width:800px;text-align:right;">618.25</div>
<svg class="a" style="left:1506.91px;top:802.10px;" width="10.64" height="13.3" viewBox="0 0 10.64 13.3"><g fill="none" stroke="#1c2b33" stroke-width="2.19" stroke-linejoin="round"><path d="M0.8512000000000001 0.798 H10.108 M0.8512000000000001 3.99 H10.108"/><path d="M1.064 0.798 H3.7239999999999998 C8.512 0.798 8.512 7.7139999999999995 3.7239999999999998 7.7139999999999995 H1.2768 L8.512 13.034"/></g></svg>
<div class="a" style="left:1755.00px;top:808.60px;width:17.00px;height:2.00px;background:#1c2b33"></div>
<div class="t" style="top:799.32px;font-size:19px;line-height:19px;color:#1c2b33;left:1122.00px;width:800px;text-align:right;">Ongoing</div>
<div class="t" style="top:799.32px;font-size:19px;line-height:19px;color:#1c2b33;left:1944.00px;">27 Jan 2026, 17:47</div>
<div class="t" style="top:825.93px;font-size:16.5px;line-height:16.5px;color:#656c74;letter-spacing:-0.15px;left:1944.00px;">10 days ago</div>
<div class="t" style="top:799.32px;font-size:19px;line-height:19px;color:#2f6fbd;left:2130.00px;">Placement &amp; audience</div>
<div class="t" style="top:827.93px;font-size:16.5px;line-height:16.5px;color:#656c74;letter-spacing:-0.15px;left:2130.00px;">3 active ads</div>
<div class="a" style="left:10.00px;top:866.90px;width:32.00px;height:32.00px;background:#fff;border:1px solid #c9ced4;border-radius:6px"></div>
<div class="a" style="left:96.00px;top:867.40px;width:49.50px;height:28.50px;background:#fff;border:1px solid #d0d4da;border-radius:15px"></div>
<div class="a" style="left:99.50px;top:870.70px;width:22.00px;height:22.00px;background:#2b3640;border-radius:50%"></div>
<div class="a" style="left:194px;top:851.40px;width:62px;height:61.3px;overflow:hidden"><svg width="62" height="61.3" viewBox="0 0 62 61.3" preserveAspectRatio="none" style="display:block;filter:blur(1.3px)"><rect x="-5" y="-5" width="72" height="72" fill="#d8d6cc"/><rect x="-5" y="8" width="72" height="22" fill="#7fb8a8"/><path d="M-5 -5 H67 V8 H-5 Z" fill="#3a3a34"/><path d="M0 24 Q20 14 36 28 L40 64 L-5 64 Z" fill="#eeeae0"/><circle cx="18" cy="14" r="10" fill="#2a2420"/><circle cx="18" cy="20" r="7" fill="#c09878"/><path d="M42 34 Q54 28 67 36 L67 64 L44 64 Z" fill="#e6e0d4"/><rect x="60" y="44" width="8" height="20" fill="#3a6aa0"/></svg></div>
<div class="t" style="top:860.62px;font-size:19px;line-height:19px;color:#1c2b33;left:266.50px;">12 Jan friends video</div>
<div class="a" style="left:664.00px;top:862.40px;width:16.00px;height:16.00px;background:#cbd0d6;border-radius:50%"></div>
<div class="t" style="top:860.62px;font-size:19px;line-height:19px;color:#1c2b33;left:690.00px;">Off</div>
<div class="a" style="left:991.80px;top:869.90px;width:17.00px;height:2.00px;background:#1c2b33"></div>
<div class="t" style="top:888.23px;font-size:16.5px;line-height:16.5px;color:#656c74;letter-spacing:-0.15px;left:208.80px;width:800px;text-align:right;">Website purchase</div>
<div class="a" style="left:1186.60px;top:869.90px;width:17.00px;height:2.00px;background:#1c2b33"></div>
<div class="t" style="top:888.23px;font-size:16.5px;line-height:16.5px;color:#656c74;letter-spacing:-0.15px;left:403.60px;width:800px;text-align:right;">Per purchase</div>
<div class="t" style="top:860.62px;font-size:19px;line-height:19px;color:#1c2b33;left:1226.00px;">Using campaign...</div>
<div class="t" style="top:860.62px;font-size:19px;line-height:19px;color:#1c2b33;left:777.00px;width:800px;text-align:right;">607.12</div>
<svg class="a" style="left:1506.91px;top:863.40px;" width="10.64" height="13.3" viewBox="0 0 10.64 13.3"><g fill="none" stroke="#1c2b33" stroke-width="2.19" stroke-linejoin="round"><path d="M0.8512000000000001 0.798 H10.108 M0.8512000000000001 3.99 H10.108"/><path d="M1.064 0.798 H3.7239999999999998 C8.512 0.798 8.512 7.7139999999999995 3.7239999999999998 7.7139999999999995 H1.2768 L8.512 13.034"/></g></svg>
<div class="a" style="left:1755.00px;top:869.90px;width:17.00px;height:2.00px;background:#1c2b33"></div>
<div class="t" style="top:860.62px;font-size:19px;line-height:19px;color:#1c2b33;left:1122.00px;width:800px;text-align:right;">Ongoing</div>
<div class="t" style="top:860.62px;font-size:19px;line-height:19px;color:#1c2b33;left:1944.00px;">27 Jan 2026, 17:47</div>
<div class="t" style="top:887.23px;font-size:16.5px;line-height:16.5px;color:#656c74;letter-spacing:-0.15px;left:1944.00px;">10 days ago</div>
<div class="t" style="top:860.62px;font-size:19px;line-height:19px;color:#2f6fbd;left:2130.00px;">Placement &amp; audience</div>
<div class="t" style="top:889.23px;font-size:16.5px;line-height:16.5px;color:#656c74;letter-spacing:-0.15px;left:2130.00px;">3 active ads</div>
<div class="a" style="left:10.00px;top:928.20px;width:32.00px;height:32.00px;background:#fff;border:1px solid #c9ced4;border-radius:6px"></div>
<div class="a" style="left:96.00px;top:928.70px;width:49.50px;height:28.50px;background:#fff;border:1px solid #d0d4da;border-radius:15px"></div>
<div class="a" style="left:99.50px;top:932.00px;width:22.00px;height:22.00px;background:#2b3640;border-radius:50%"></div>
<div class="a" style="left:194px;top:912.70px;width:62px;height:61.3px;overflow:hidden"><svg width="62" height="61.3" viewBox="0 0 62 61.3" preserveAspectRatio="none" style="display:block;filter:blur(1.3px)"><rect x="-5" y="-5" width="72" height="72" fill="#e7ddd0"/><path d="M8 22 H54 M14 28 H48" stroke="#fbf7f0" stroke-width="2"/></svg></div>
<svg class="a" style="left:226.00px;top:948.70px;" width="24" height="24" viewBox="0 0 24 24"><circle cx="10" cy="10" r="7.5" fill="none" stroke="#fff" stroke-width="2"/><path d="M10 6.5 V13.5 M6.5 10 H13.5 M15.5 15.5 L22 22" stroke="#fff" stroke-width="2" stroke-linecap="round"/></svg>
<svg class="a" style="left:266.00px;top:955.70px;" width="9" height="11" viewBox="0 0 9 11"><rect x="0" y="5" width="2.2" height="6" fill="#2b3640"/><rect x="3.4" y="2" width="2.2" height="9" fill="#2b3640"/><rect x="6.8" y="0" width="2.2" height="11" fill="#2b3640"/></svg>
<div class="t" style="top:921.92px;font-size:19px;line-height:19px;color:#1c2b33;left:266.50px;">1 Statement tee</div>
<div class="a" style="left:664.00px;top:923.70px;width:16.00px;height:16.00px;background:#cbd0d6;border-radius:50%"></div>
<div class="t" style="top:921.92px;font-size:19px;line-height:19px;color:#1c2b33;left:690.00px;">Off</div>
<div class="a" style="left:991.80px;top:931.20px;width:17.00px;height:2.00px;background:#1c2b33"></div>
<div class="t" style="top:949.53px;font-size:16.5px;line-height:16.5px;color:#656c74;letter-spacing:-0.15px;left:208.80px;width:800px;text-align:right;">Website purchase</div>
<div class="a" style="left:1186.60px;top:931.20px;width:17.00px;height:2.00px;background:#1c2b33"></div>
<div class="t" style="top:949.53px;font-size:16.5px;line-height:16.5px;color:#656c74;letter-spacing:-0.15px;left:403.60px;width:800px;text-align:right;">Per purchase</div>
<div class="t" style="top:921.92px;font-size:19px;line-height:19px;color:#1c2b33;left:1226.00px;">Using campaign...</div>
<div class="t" style="top:921.92px;font-size:19px;line-height:19px;color:#1c2b33;left:777.00px;width:800px;text-align:right;">104.09</div>
<svg class="a" style="left:1506.91px;top:924.70px;" width="10.64" height="13.3" viewBox="0 0 10.64 13.3"><g fill="none" stroke="#1c2b33" stroke-width="2.19" stroke-linejoin="round"><path d="M0.8512000000000001 0.798 H10.108 M0.8512000000000001 3.99 H10.108"/><path d="M1.064 0.798 H3.7239999999999998 C8.512 0.798 8.512 7.7139999999999995 3.7239999999999998 7.7139999999999995 H1.2768 L8.512 13.034"/></g></svg>
<div class="a" style="left:1755.00px;top:931.20px;width:17.00px;height:2.00px;background:#1c2b33"></div>
<div class="t" style="top:921.92px;font-size:19px;line-height:19px;color:#1c2b33;left:1122.00px;width:800px;text-align:right;">Ongoing</div>
<div class="t" style="top:921.92px;font-size:19px;line-height:19px;color:#1c2b33;left:1944.00px;">27 Jan 2026, 17:47</div>
<div class="t" style="top:948.53px;font-size:16.5px;line-height:16.5px;color:#656c74;letter-spacing:-0.15px;left:1944.00px;">10 days ago</div>
<div class="t" style="top:921.92px;font-size:19px;line-height:19px;color:#2f6fbd;left:2130.00px;">Placement &amp; audience</div>
<div class="t" style="top:950.53px;font-size:16.5px;line-height:16.5px;color:#656c74;letter-spacing:-0.15px;left:2130.00px;">3 active ads</div>
<div class="a" style="left:10.00px;top:989.50px;width:32.00px;height:32.00px;background:#fff;border:1px solid #c9ced4;border-radius:6px"></div>
<div class="a" style="left:96.00px;top:990.00px;width:49.50px;height:28.50px;background:#e2ebf6;border:1px solid #d3dde9;border-radius:15px"></div>
<div class="a" style="left:118.00px;top:990.70px;width:27.00px;height:27.00px;background:#3373c0;border-radius:50%"></div>
<div class="a" style="left:194px;top:974.00px;width:62px;height:61.3px;overflow:hidden"><div style="width:62px;height:61.3px;background:#e6e4e1"></div></div>
<svg class="a" style="left:215.00px;top:996.00px;" width="20" height="17" viewBox="0 0 20 17"><rect x="1" y="1" width="18" height="15" rx="2" fill="#d7d5d2"/><path d="M3 14 L8 8 L12 12 L14 10 L17 14 Z" fill="#c8c6c3"/></svg>
<div class="t" style="top:983.22px;font-size:19px;line-height:19px;color:#1c2b33;left:266.50px;">Coach jacket mix</div>
<div class="a" style="left:664.00px;top:985.00px;width:16.00px;height:16.00px;background:#d9802b;border-radius:50%"></div>
<div class="t" style="top:983.22px;font-size:19px;line-height:19px;color:#1c2b33;left:690.00px;">Learning limite</div>
<div class="a" style="left:991.80px;top:992.50px;width:17.00px;height:2.00px;background:#1c2b33"></div>
<div class="t" style="top:1010.83px;font-size:16.5px;line-height:16.5px;color:#656c74;letter-spacing:-0.15px;left:208.80px;width:800px;text-align:right;">Website purchase</div>
<div class="a" style="left:1186.60px;top:992.50px;width:17.00px;height:2.00px;background:#1c2b33"></div>
<div class="t" style="top:1010.83px;font-size:16.5px;line-height:16.5px;color:#656c74;letter-spacing:-0.15px;left:403.60px;width:800px;text-align:right;">Per purchase</div>
<div class="t" style="top:983.22px;font-size:19px;line-height:19px;color:#1c2b33;left:1226.00px;">Using campaign...</div>
<div class="t" style="top:983.22px;font-size:19px;line-height:19px;color:#1c2b33;left:777.00px;width:800px;text-align:right;">4,903.55</div>
<svg class="a" style="left:1491.06px;top:986.00px;" width="10.64" height="13.3" viewBox="0 0 10.64 13.3"><g fill="none" stroke="#1c2b33" stroke-width="2.19" stroke-linejoin="round"><path d="M0.8512000000000001 0.798 H10.108 M0.8512000000000001 3.99 H10.108"/><path d="M1.064 0.798 H3.7239999999999998 C8.512 0.798 8.512 7.7139999999999995 3.7239999999999998 7.7139999999999995 H1.2768 L8.512 13.034"/></g></svg>
<div class="a" style="left:1755.00px;top:992.50px;width:17.00px;height:2.00px;background:#1c2b33"></div>
<div class="t" style="top:983.22px;font-size:19px;line-height:19px;color:#1c2b33;left:1122.00px;width:800px;text-align:right;">Ongoing</div>
<div class="t" style="top:983.22px;font-size:19px;line-height:19px;color:#1c2b33;left:1944.00px;">25 Jan 2026, 11:29</div>
<div class="t" style="top:1009.83px;font-size:16.5px;line-height:16.5px;color:#656c74;letter-spacing:-0.15px;left:1944.00px;">12 days ago</div>
<div class="t" style="top:983.22px;font-size:19px;line-height:19px;color:#2f6fbd;left:2130.00px;">Mix 1</div>
<div class="t" style="top:1011.83px;font-size:16.5px;line-height:16.5px;color:#656c74;letter-spacing:-0.15px;left:2130.00px;">1 active ad</div>
<div class="a" style="left:10.00px;top:1050.80px;width:32.00px;height:32.00px;background:#fff;border:1px solid #c9ced4;border-radius:6px"></div>
<div class="a" style="left:96.00px;top:1051.30px;width:49.50px;height:28.50px;background:#fff;border:1px solid #d0d4da;border-radius:15px"></div>
<div class="a" style="left:99.50px;top:1054.60px;width:22.00px;height:22.00px;background:#2b3640;border-radius:50%"></div>
<div class="t" style="top:1044.52px;font-size:19px;line-height:19px;color:#1c2b33;left:266.50px;">2 Mix ad</div>
<div class="a" style="left:664.00px;top:1046.30px;width:16.00px;height:16.00px;background:#cbd0d6;border-radius:50%"></div>
<div class="t" style="top:1044.52px;font-size:19px;line-height:19px;color:#1c2b33;left:690.00px;">Off</div>
<div class="a" style="left:991.80px;top:1053.80px;width:17.00px;height:2.00px;background:#1c2b33"></div>
<div class="a" style="left:1186.60px;top:1053.80px;width:17.00px;height:2.00px;background:#1c2b33"></div>
<div class="t" style="top:1044.52px;font-size:19px;line-height:19px;color:#1c2b33;left:1226.00px;">Using campaign...</div>
<div class="t" style="top:1044.52px;font-size:19px;line-height:19px;color:#1c2b33;left:777.00px;width:800px;text-align:right;">0.00</div>
<svg class="a" style="left:1528.03px;top:1047.30px;" width="10.64" height="13.3" viewBox="0 0 10.64 13.3"><g fill="none" stroke="#1c2b33" stroke-width="2.19" stroke-linejoin="round"><path d="M0.8512000000000001 0.798 H10.108 M0.8512000000000001 3.99 H10.108"/><path d="M1.064 0.798 H3.7239999999999998 C8.512 0.798 8.512 7.7139999999999995 3.7239999999999998 7.7139999999999995 H1.2768 L8.512 13.034"/></g></svg>
<div class="a" style="left:1755.00px;top:1053.80px;width:17.00px;height:2.00px;background:#1c2b33"></div>
<div class="t" style="top:1044.52px;font-size:19px;line-height:19px;color:#1c2b33;left:1122.00px;width:800px;text-align:right;">Ongoing</div>
<div class="t" style="top:1044.52px;font-size:19px;line-height:19px;color:#1c2b33;left:1944.00px;">25 Jan 2026, 11:29</div>
<div class="t" style="top:1071.13px;font-size:16.5px;line-height:16.5px;color:#656c74;letter-spacing:-0.15px;left:1944.00px;">12 days ago</div>
<div class="t" style="top:1044.52px;font-size:19px;line-height:19px;color:#2f6fbd;left:2130.00px;">Mix 2</div>
<div class="t" style="top:1073.13px;font-size:16.5px;line-height:16.5px;color:#656c74;letter-spacing:-0.15px;left:2130.00px;">1 active ad</div>
<div class="a" style="left:663.50px;top:264.00px;width:1.20px;height:930.00px;background:#e1e4e8"></div>
<div class="a" style="left:664.70px;top:264.00px;width:6.00px;height:930.00px;background:linear-gradient(90deg,rgba(0,0,0,0.045),rgba(0,0,0,0))"></div>
<div class="a" style="left:2384.00px;top:300.00px;width:8.50px;height:788.00px;background:#c1c3c6;border-radius:5px"></div>
<div class="a" style="left:0.00px;top:264.00px;width:2400.00px;height:64.40px;background:#fff;border-top:1px solid #dfe2e6;border-bottom:1px solid #dfe2e6"></div>
<div class="a" style="left:0.00px;top:328.40px;width:2400.00px;height:6.00px;background:linear-gradient(180deg,rgba(0,0,0,0.05),rgba(0,0,0,0))"></div>
<div class="a" style="left:9.50px;top:281.50px;width:31.50px;height:31.50px;background:#fff;border:1px solid #c9ced4;border-radius:6px"></div>
<div class="a" style="left:57.00px;top:265.00px;width:1.00px;height:63.00px;background:#e4e6ea"></div>
<div class="t" style="top:288.12px;font-size:19px;line-height:19px;color:#1c2b33;font-weight:700;-webkit-text-stroke:0;letter-spacing:-0.4px;left:72.00px;">Off...</div>
<svg class="a" style="left:128.00px;top:287.00px;" width="20" height="19" viewBox="0 0 20 19"><g fill="none" stroke="#1c2b33" stroke-width="2" stroke-linecap="round" stroke-linejoin="round"><path d="M5 17 V2 M1 6 L5 2 L9 6"/><path d="M15 2 V17 M11 13 L15 17 L19 13"/></g></svg>
<div class="a" style="left:182.00px;top:265.00px;width:1.00px;height:63.00px;background:#e4e6ea"></div>
<div class="t" style="top:288.12px;font-size:19px;line-height:19px;color:#1c2b33;font-weight:700;-webkit-text-stroke:0;letter-spacing:-0.4px;left:198.00px;">Ad</div>
<svg class="a" style="left:227.50px;top:287.00px;" width="20" height="19" viewBox="0 0 20 19"><g fill="none" stroke="#1c2b33" stroke-width="2" stroke-linecap="round" stroke-linejoin="round"><path d="M5 17 V2 M1 6 L5 2 L9 6"/><path d="M15 2 V17 M11 13 L15 17 L19 13"/></g></svg>
<svg class="a" style="left:640.50px;top:293.50px;" width="11.5" height="7" viewBox="0 0 11.5 7"><path d="M0.5 0.8 L11.0 0.8 L5.75 6.5 Z" fill="#1c2b33" stroke="#1c2b33" stroke-width="1" stroke-linejoin="round"/></svg>
<div class="a" style="left:663.50px;top:265.00px;width:1.20px;height:63.00px;background:#e1e4e8"></div>
<div class="t" style="top:288.12px;font-size:19px;line-height:19px;color:#1c2b33;font-weight:700;-webkit-text-stroke:0;letter-spacing:-0.4px;left:666.00px;">Delivery</div>
<svg class="a" style="left:744.00px;top:287.00px;" width="20" height="19" viewBox="0 0 20 19"><g fill="none" stroke="#1c2b33" stroke-width="2" stroke-linecap="round" stroke-linejoin="round"><path d="M5 17 V2 M1 6 L5 2 L9 6"/><path d="M15 2 V17 M11 13 L15 17 L19 13"/></g></svg>
<svg class="a" style="left:802.00px;top:293.50px;" width="11.5" height="7" viewBox="0 0 11.5 7"><path d="M0.5 0.8 L11.0 0.8 L5.75 6.5 Z" fill="#1c2b33" stroke="#1c2b33" stroke-width="1" stroke-linejoin="round"/></svg>
<div class="a" style="left:824.00px;top:265.00px;width:1.00px;height:63.00px;background:#e4e6ea"></div>
<div class="t" style="top:288.12px;font-size:19px;line-height:19px;color:#3271bf;font-weight:700;-webkit-text-stroke:0;letter-spacing:-0.4px;left:849.50px;">Results</div>
<svg class="a" style="left:922.00px;top:287.00px;" width="16" height="19" viewBox="0 0 16 19"><path d="M8 2 V17 M2.5 11.5 L8 17 L13.5 11.5" fill="none" stroke="#1c2b33" stroke-width="2" stroke-linecap="round" stroke-linejoin="round"/></svg>
<svg class="a" style="left:996.00px;top:293.50px;" width="11.5" height="7" viewBox="0 0 11.5 7"><path d="M0.5 0.8 L11.0 0.8 L5.75 6.5 Z" fill="#1c2b33" stroke="#1c2b33" stroke-width="1" stroke-linejoin="round"/></svg>
<div class="a" style="left:1019.50px;top:265.00px;width:1.00px;height:63.00px;background:#e4e6ea"></div>
<div class="t" style="top:276.42px;font-size:19px;line-height:19px;color:#1c2b33;font-weight:700;-webkit-text-stroke:0;letter-spacing:-0.4px;left:1034.00px;">Cost per</div>
<div class="t" style="top:300.92px;font-size:19px;line-height:19px;color:#1c2b33;font-weight:700;-webkit-text-stroke:0;letter-spacing:-0.4px;left:1034.00px;">result</div>
<svg class="a" style="left:1159.50px;top:287.00px;" width="20" height="19" viewBox="0 0 20 19"><g fill="none" stroke="#1c2b33" stroke-width="2" stroke-linecap="round" stroke-linejoin="round"><path d="M5 17 V2 M1 6 L5 2 L9 6"/><path d="M15 2 V17 M11 13 L15 17 L19 13"/></g></svg>
<svg class="a" style="left:1191.50px;top:293.50px;" width="11.5" height="7" viewBox="0 0 11.5 7"><path d="M0.5 0.8 L11.0 0.8 L5.75 6.5 Z" fill="#1c2b33" stroke="#1c2b33" stroke-width="1" stroke-linejoin="round"/></svg>
<div class="a" style="left:1214.50px;top:265.00px;width:1.00px;height:63.00px;background:#e4e6ea"></div>
<div class="t" style="top:276.92px;font-size:19px;line-height:19px;color:#1c2b33;font-weight:700;-webkit-text-stroke:0;letter-spacing:-0.4px;left:1229.00px;">Budget</div>
<div class="t" style="top:302.03px;font-size:16.5px;line-height:16.5px;color:#656c74;left:1229.00px;">Ad set</div>
<svg class="a" style="left:1370.00px;top:293.50px;" width="11.5" height="7" viewBox="0 0 11.5 7"><path d="M0.5 0.8 L11.0 0.8 L5.75 6.5 Z" fill="#1c2b33" stroke="#1c2b33" stroke-width="1" stroke-linejoin="round"/></svg>
<div class="t" style="top:276.42px;font-size:19px;line-height:19px;color:#1c2b33;font-weight:700;-webkit-text-stroke:0;letter-spacing:-0.4px;left:1407.00px;">Amount</div>
<div class="t" style="top:300.92px;font-size:19px;line-height:19px;color:#1c2b33;font-weight:700;-webkit-text-stroke:0;letter-spacing:-0.4px;left:1407.00px;">spent</div>
<div class="t" style="top:288.12px;font-size:19px;line-height:19px;color:#1c2b33;font-weight:700;-webkit-text-stroke:0;left:1580.00px;">Reach</div>
<div class="t" style="top:288.12px;font-size:19px;line-height:19px;color:#1c2b33;font-weight:700;-webkit-text-stroke:0;left:1800.00px;">Ends</div>
<div class="t" style="top:288.12px;font-size:19px;line-height:19px;color:#1c2b33;font-weight:700;-webkit-text-stroke:0;left:1944.00px;">Last significant edit</div>
<div class="t" style="top:288.12px;font-size:19px;line-height:19px;color:#1c2b33;font-weight:700;-webkit-text-stroke:0;left:2130.00px;">Ad set name</div>
<div class="a" style="left:0.00px;top:1097.00px;width:2400.00px;height:96.00px;background:#fff;border-top:1px solid #dfe2e6"></div>
<div class="a" style="left:663.50px;top:1098.00px;width:1.20px;height:95.00px;background:#e1e4e8"></div>
<div class="t" style="top:1111.42px;font-size:19px;line-height:19px;color:#1c2b33;left:200.00px;">Results from 13 ads</div>
<div class="a" style="left:995.00px;top:1119.50px;width:17.00px;height:2.00px;background:#1c2b33"></div>
<div class="t" style="top:1137.53px;font-size:16.5px;line-height:16.5px;color:#656c74;letter-spacing:-0.15px;left:212.00px;width:800px;text-align:right;">Multiple conversions</div>
<div class="a" style="left:1189.70px;top:1119.50px;width:17.00px;height:2.00px;background:#1c2b33"></div>
<div class="t" style="top:1137.53px;font-size:16.5px;line-height:16.5px;color:#656c74;letter-spacing:-0.15px;left:406.70px;width:800px;text-align:right;">Multiple conversions</div>
<div class="t" style="top:1111.42px;font-size:19px;line-height:19px;color:#1c2b33;left:779.00px;width:800px;text-align:right;">972,102.50</div>
<svg class="a" style="left:1471.94px;top:1114.20px;" width="10.64" height="13.3" viewBox="0 0 10.64 13.3"><g fill="none" stroke="#1c2b33" stroke-width="2.19" stroke-linejoin="round"><path d="M0.8512000000000001 0.798 H10.108 M0.8512000000000001 3.99 H10.108"/><path d="M1.064 0.798 H3.7239999999999998 C8.512 0.798 8.512 7.7139999999999995 3.7239999999999998 7.7139999999999995 H1.2768 L8.512 13.034"/></g></svg>
<div class="t" style="top:1137.53px;font-size:16.5px;line-height:16.5px;color:#656c74;letter-spacing:-0.15px;left:779.00px;width:800px;text-align:right;">Total Spent</div>
<div class="t" style="top:1111.42px;font-size:19px;line-height:19px;color:#1c2b33;left:974.00px;width:800px;text-align:right;">634</div>
<div class="t" style="top:1137.53px;font-size:16.5px;line-height:16.5px;color:#656c74;letter-spacing:-0.15px;left:974.00px;width:800px;text-align:right;">Total</div>
<div class="a" style="left:1947.50px;top:1119.50px;width:17.00px;height:2.00px;background:#1c2b33"></div>
<div class="a" style="left:275px;top:667px;width:448px;height:511px;background:#fff;border-radius:3px;box-shadow:0 0 0 1px rgba(0,0,0,0.08),0 2px 12px rgba(0,0,0,0.26)"></div>
<svg class="a" style="left:262.00px;top:680.00px;" width="16" height="28" viewBox="0 0 16 28"><path d="M14 0 L3 14 L14 28 Z" fill="#fff"/><path d="M14 0 L3 14 L14 28" fill="none" stroke="rgba(0,0,0,0.12)" stroke-width="1"/></svg>
<div class="a" style="left:272.00px;top:682.00px;width:6.00px;height:24.00px;background:#fff"></div>
<div class="a" style="left:285.30px;top:678.30px;width:425.30px;height:54.00px;background:#f8f8f8;border:1px solid #c6c6c6;border-bottom:1px solid #cfcfcf"></div>
<div class="a" style="left:285.30px;top:732.30px;width:425.30px;height:54.00px;background:#fff;border-left:1px solid #c6c6c6;border-right:1px solid #c6c6c6"></div>
<svg class="a" style="left:445.00px;top:688.00px;" width="110" height="40" viewBox="0 0 2468 897"><g fill="none" stroke="#262626" stroke-width="46" stroke-linecap="round" stroke-linejoin="round"><path d="M235 410 C160 360 210 230 300 195 C335 185 330 300 322 400 C312 500 305 575 275 615"/><path d="M412 330 L418 570"/><path d="M420 500 C460 390 520 320 550 335 C575 360 560 480 572 565"/><path d="M735 335 C680 330 665 385 705 420 C770 462 800 505 775 548 C748 585 685 575 668 555"/><path d="M885 195 L885 515 C885 572 930 580 958 558"/><path d="M795 285 H990" stroke-width="40"/><path d="M1158 385 C1115 305 1020 330 1015 465 C1012 585 1110 590 1158 470"/><path d="M1160 335 L1165 540 C1170 580 1205 578 1228 560"/><path d="M1425 385 C1385 305 1290 330 1285 460 C1282 585 1380 590 1425 475"/><path d="M1428 335 L1432 640 C1432 760 1300 790 1280 720 C1265 650 1350 605 1400 575"/><path d="M1440 555 C1475 460 1500 385 1515 335 C1530 375 1565 370 1598 345 C1618 332 1640 350 1628 372"/><path d="M1862 385 C1820 305 1725 330 1700 465 C1690 585 1800 590 1862 470"/><path d="M1865 335 L1870 545 C1875 580 1915 578 1945 555"/><path d="M1960 330 L1968 572"/><path d="M1970 500 C2000 390 2050 320 2070 335 C2090 360 2080 480 2088 568"/><path d="M2090 500 C2120 390 2165 320 2185 335 C2210 360 2195 470 2205 540 C2215 590 2260 575 2285 485"/></g></svg>
<svg class="a" style="left:300.00px;top:742.00px;" width="34" height="34" viewBox="0 0 34 34"><circle cx="17" cy="17" r="17" fill="#000"/><ellipse cx="17" cy="17" rx="13" ry="7.5" transform="rotate(-22 17 17)" fill="none" stroke="#fff" stroke-width="1.3"/><text x="17" y="20.5" font-size="10" fill="#fff" text-anchor="middle" font-family="Liberation Sans" font-weight="700">cp</text></svg>
<div class="t" style="top:740.69px;font-size:17.5px;line-height:17.5px;color:#111;font-weight:700;-webkit-text-stroke:0;left:345.50px;">capsulindia</div>
<svg class="a" style="left:445.50px;top:741.00px;" width="12" height="12" viewBox="0 0 12 12"><circle cx="6" cy="6" r="5.6" fill="#3a3a3a"/><path d="M3.4 6.2 L5.3 8 L8.7 4.3" fill="none" stroke="#fff" stroke-width="1.4"/></svg>
<div class="t" style="top:762.73px;font-size:14.5px;line-height:14.5px;color:#262626;left:345.50px;">Ad</div>
<svg class="a" style="left:670.00px;top:755.00px;" width="22" height="6" viewBox="0 0 22 6"><circle cx="3" cy="3" r="2.3" fill="#111"/><circle cx="11" cy="3" r="2.3" fill="#111"/><circle cx="19" cy="3" r="2.3" fill="#111"/></svg>
<div class="a" style="left:285.5px;top:786px;width:425px;height:392px;overflow:hidden"><svg width="425" height="392" viewBox="0 0 425 392" style="display:block">
<defs>
 <linearGradient id="sky" x1="0" y1="0" x2="0" y2="1">
  <stop offset="0" stop-color="#26212f"/><stop offset="0.18" stop-color="#2c2637"/>
  <stop offset="0.33" stop-color="#342b3b"/><stop offset="0.46" stop-color="#2e2630"/>
  <stop offset="0.49" stop-color="#1f1c22"/><stop offset="1" stop-color="#19171b"/>
 </linearGradient>
 <linearGradient id="glow" x1="0" y1="0" x2="1" y2="0">
  <stop offset="0" stop-color="#6e3d3a" stop-opacity="0"/><stop offset="0.55" stop-color="#6e3d3a" stop-opacity="0.35"/><stop offset="1" stop-color="#8a4a3c" stop-opacity="0.75"/>
 </linearGradient>
 <filter id="blur6" x="-50%" y="-50%" width="200%" height="200%"><feGaussianBlur stdDeviation="6"/></filter>
 <filter id="blur3" x="-10%" y="-100%" width="120%" height="300%"><feGaussianBlur stdDeviation="3"/></filter>
 <linearGradient id="jacket" x1="0" y1="0" x2="1" y2="0">
  <stop offset="0" stop-color="#5a1b33"/><stop offset="0.35" stop-color="#7a2a48"/><stop offset="0.7" stop-color="#722643"/><stop offset="1" stop-color="#561a30"/>
 </linearGradient>
 <linearGradient id="jeans" x1="0" y1="0" x2="1" y2="0">
  <stop offset="0" stop-color="#3e5484"/><stop offset="0.45" stop-color="#566d9e"/><stop offset="1" stop-color="#3a4c78"/>
 </linearGradient>
</defs>
<rect width="425" height="392" fill="url(#sky)"/>
<g filter="url(#blur6)"><ellipse cx="390" cy="160" rx="160" ry="30" fill="#5a3436" opacity="0.7"/><ellipse cx="400" cy="152" rx="80" ry="5" fill="#8a4c42" opacity="0.5"/><ellipse cx="380" cy="172" rx="70" ry="4" fill="#7a443e" opacity="0.45"/><ellipse cx="330" cy="118" rx="80" ry="12" fill="#3e303c" opacity="0.6"/></g>

<rect x="0" y="180" width="84" height="10" fill="#3a2e2c" opacity="0.7"/>
<rect x="0" y="186" width="425" height="206" fill="#1b191d"/><rect x="0" y="180" width="425" height="12" fill="#1b191d" filter="url(#blur3)"/>
<path d="M290 200 Q370 205 426 215 L426 330 Q360 300 290 310 Z" fill="#231a20" opacity="0.6"/>
<g filter="url(#blur3)">
<path d="M0 250 L60 262 L120 300 L165 350 L175 392 L0 392 Z" fill="#242327"/>
<path d="M0 300 L50 310 L95 340 L120 392 L0 392 Z" fill="#2d2c30"/>
<path d="M10 330 L40 322 L70 350 L30 360 Z" fill="#38373b"/>
<path d="M125 300 L150 296 L160 312 L135 316 Z" fill="#5a5a5e"/>
<path d="M140 360 L165 352 L172 368 L150 372 Z" fill="#4a4a4e"/>
<path d="M290 320 L350 312 L426 330 L426 392 L280 392 Z" fill="#201f23"/>
<path d="M300 230 L426 226 L426 300 L300 300 Z" fill="#2a1f25" opacity="0.6"/>
</g>


<g stroke="#ecebe6" stroke-width="4" stroke-linecap="round" fill="none" opacity="0.92">
 <path d="M16 60 L45 62"/><path d="M10 98 L44 102"/><path d="M30 111 Q55 125 90 126"/>
 <path d="M45 141 Q70 147 94 147"/><path d="M28 154 L74 158"/><path d="M32 167 L59 168"/>
</g>
<rect x="15" y="62" width="2.5" height="128" fill="#4a4850"/>
<!-- man -->
<path d="M196 122 L236 120 Q262 130 276 142 Q286 175 285 214 Q282 240 274 268 L176 268 Q166 240 160 214 Q160 170 168 142 Q182 128 196 122 Z" fill="url(#jacket)"/>
<path d="M160 196 Q162 232 190 262 L200 252 Q178 228 174 196 Z" fill="#4e1629" opacity="0.7"/>
<path d="M285 196 Q280 236 250 262 L242 252 Q268 226 272 196 Z" fill="#4e1629" opacity="0.7"/>
<rect x="175" y="262" width="96" height="22" fill="#141316"/>
<path d="M179 284 L276 284 L281 392 L182 392 Z" fill="url(#jeans)"/>
<path d="M228 286 L229 392" stroke="#33466f" stroke-width="1.5"/>
<path d="M200 242 Q216 236 236 242 L234 264 Q216 270 202 264 Z" fill="#b98b72"/>
<path d="M197 118 L231 116 L230 136 L200 137 Z" fill="#b98a70"/>
<path d="M202 124 L228 124 L226 136 L204 136 Z" fill="#151416"/>
<ellipse cx="210" cy="104" rx="21" ry="22" fill="#c9977c"/>
<path d="M186 78 Q200 62 222 64 Q236 68 234 92 L190 94 Z" fill="#7a2a44"/>
<path d="M172 88 Q182 82 200 84 L198 94 Q184 96 172 94 Z" fill="#8c3553"/>
<path d="M226 92 Q234 90 235 100 L232 112 Q227 106 225 102 Z" fill="#2a2224"/>
<!-- text -->
<g fill="#f2f2f2" font-family="Liberation Sans">
<text x="222" y="32" font-size="17" font-style="italic" font-weight="700" text-anchor="middle" font-family="Liberation Serif">NTR-O</text>
<text x="271" y="98" font-size="5.5" text-anchor="middle">Cursive Trucker Cap</text>
<text x="272" y="108" font-size="5.2" text-anchor="middle">3,000</text>
<text x="123" y="247" font-size="5.5" text-anchor="middle">Coach Jacket (Maroon)</text>
<text x="125" y="256" font-size="5.2" text-anchor="middle">5,000</text>
<text x="322" y="307" font-size="5.5" text-anchor="middle">Classic Denim (Raw)</text>
<text x="322" y="317" font-size="5.2" text-anchor="middle">6,000</text>
<text x="211" y="350" font-size="10" text-anchor="middle">NEW DROP</text>
<text x="211" y="367" font-size="10" text-anchor="middle">ONLY AT</text>
<text x="211" y="400" font-size="28" text-anchor="middle">Capsul</text>
</g>
<g fill="none" stroke="#eee" stroke-width="0.8"><path d="M228 85 Q236 82 240 88"/><path d="M162 210 Q154 210 150 216"/><path d="M270 288 Q282 288 290 296"/></g>
<path d="M48 197 L32 213 L48 229" fill="none" stroke="#a3a3a3" stroke-width="5" stroke-linecap="round" stroke-linejoin="round"/>
<path d="M377 197 L393 213 L377 229" fill="none" stroke="#a3a3a3" stroke-width="5" stroke-linecap="round" stroke-linejoin="round"/>
</svg></div>
<div class="a" style="left:1519px;top:198px;width:937.5px;height:693px;background:#fff;border-radius:8px;box-shadow:0 1px 2px rgba(0,0,0,0.18),0 4px 36px rgba(0,0,0,0.16)"></div>
<div class="a" style="left:1779.50px;top:198.00px;width:6.00px;height:693.00px;background:linear-gradient(90deg,#efefef,#fafafa 50%,#fff)"></div>
<div class="t" style="top:225.26px;font-size:18px;line-height:18px;color:#1c2b33;font-weight:700;-webkit-text-stroke:0;left:1541.00px;">Recently used</div>
<div class="a" style="left:1540.00px;top:256.80px;width:32.00px;height:32.00px;background:#fff;border:1px solid #c6ccd3;border-radius:50%"></div>
<div class="t" style="top:263.72px;font-size:19px;line-height:19px;color:#1c2b33;left:1584.00px;">Today</div>
<div class="a" style="left:1540.00px;top:302.00px;width:32.00px;height:32.00px;background:#fff;border:1px solid #c6ccd3;border-radius:50%"></div>
<div class="t" style="top:308.92px;font-size:19px;line-height:19px;color:#1c2b33;left:1584.00px;">Last 14 days</div>
<div class="a" style="left:1540.00px;top:347.60px;width:32.00px;height:32.00px;background:#fff;border:1px solid #c6ccd3;border-radius:50%"></div>
<div class="a" style="left:1547.80px;top:355.40px;width:16.40px;height:16.40px;background:#3271bf;border-radius:50%"></div>
<div class="t" style="top:354.52px;font-size:19px;line-height:19px;color:#1c2b33;left:1584.00px;">Maximum</div>
<div class="a" style="left:1540.00px;top:390.00px;width:219.00px;height:1.20px;background:#ccd2d9"></div>
<div class="a" style="left:1540.00px;top:401.80px;width:32.00px;height:32.00px;background:#fff;border:1px solid #c6ccd3;border-radius:50%"></div>
<div class="t" style="top:408.72px;font-size:19px;line-height:19px;color:#1c2b33;left:1584.00px;">Today</div>
<div class="a" style="left:1540.00px;top:447.10px;width:32.00px;height:32.00px;background:#fff;border:1px solid #c6ccd3;border-radius:50%"></div>
<div class="t" style="top:454.02px;font-size:19px;line-height:19px;color:#1c2b33;left:1584.00px;">Yesterday</div>
<div class="a" style="left:1540.00px;top:492.40px;width:32.00px;height:32.00px;background:#fff;border:1px solid #c6ccd3;border-radius:50%"></div>
<div class="t" style="top:499.32px;font-size:19px;line-height:19px;color:#1c2b33;left:1584.00px;">Today and yesterday</div>
<div class="a" style="left:1540.00px;top:537.70px;width:32.00px;height:32.00px;background:#fff;border:1px solid #c6ccd3;border-radius:50%"></div>
<div class="t" style="top:544.62px;font-size:19px;line-height:19px;color:#1c2b33;left:1584.00px;">Last 7 days</div>
<div class="a" style="left:1540.00px;top:583.00px;width:32.00px;height:32.00px;background:#fff;border:1px solid #c6ccd3;border-radius:50%"></div>
<div class="t" style="top:589.92px;font-size:19px;line-height:19px;color:#1c2b33;left:1584.00px;">Last 14 days</div>
<div class="a" style="left:1540.00px;top:628.30px;width:32.00px;height:32.00px;background:#fff;border:1px solid #c6ccd3;border-radius:50%"></div>
<div class="t" style="top:635.22px;font-size:19px;line-height:19px;color:#1c2b33;left:1584.00px;">Last 28 days</div>
<div class="a" style="left:1540.00px;top:673.60px;width:32.00px;height:32.00px;background:#fff;border:1px solid #c6ccd3;border-radius:50%"></div>
<div class="t" style="top:680.52px;font-size:19px;line-height:19px;color:#1c2b33;left:1584.00px;">Last 30 days</div>
<div class="a" style="left:1540.00px;top:718.90px;width:32.00px;height:32.00px;background:#fff;border:1px solid #c6ccd3;border-radius:50%"></div>
<div class="t" style="top:725.82px;font-size:19px;line-height:19px;color:#1c2b33;left:1584.00px;">This week</div>
<div class="a" style="left:1540.00px;top:764.20px;width:32.00px;height:32.00px;background:#fff;border:1px solid #c6ccd3;border-radius:50%"></div>
<div class="t" style="top:771.12px;font-size:19px;line-height:19px;color:#1c2b33;left:1584.00px;">Last week</div>
<div class="a" style="left:1540.00px;top:809.50px;width:32.00px;height:32.00px;background:#fff;border:1px solid #c6ccd3;border-radius:50%"></div>
<div class="t" style="top:816.42px;font-size:19px;line-height:19px;color:#1c2b33;left:1584.00px;">This month</div>
<div class="a" style="left:1540.00px;top:854.80px;width:32.00px;height:32.00px;background:#fff;border:1px solid #c6ccd3;border-radius:50%"></div>
<div class="t" style="top:861.72px;font-size:19px;line-height:19px;color:#1c2b33;left:1584.00px;">Last month</div>
<div class="t" style="top:223.92px;font-size:19px;line-height:19px;color:#1c2b33;left:1902.80px;">Jan</div>
<svg class="a" style="left:1948.80px;top:229.00px;" width="13" height="8" viewBox="0 0 13 8"><path d="M0.5 0.8 L12.5 0.8 L6.5 7.5 Z" fill="#1c2b33" stroke="#1c2b33" stroke-width="1" stroke-linejoin="round"/></svg>
<div class="t" style="top:223.92px;font-size:19px;line-height:19px;color:#1c2b33;left:2003.80px;">2023</div>
<svg class="a" style="left:2064.30px;top:229.00px;" width="13" height="8" viewBox="0 0 13 8"><path d="M0.5 0.8 L12.5 0.8 L6.5 7.5 Z" fill="#1c2b33" stroke="#1c2b33" stroke-width="1" stroke-linejoin="round"/></svg>
<div class="t" style="top:270.33px;font-size:16.5px;line-height:16.5px;color:#656c74;letter-spacing:-0.1px;left:1421.95px;width:800px;text-align:center;">Sun</div>
<div class="t" style="top:270.33px;font-size:16.5px;line-height:16.5px;color:#656c74;letter-spacing:-0.1px;left:1464.25px;width:800px;text-align:center;">Mon</div>
<div class="t" style="top:270.33px;font-size:16.5px;line-height:16.5px;color:#656c74;letter-spacing:-0.1px;left:1506.55px;width:800px;text-align:center;">Tue</div>
<div class="t" style="top:270.33px;font-size:16.5px;line-height:16.5px;color:#656c74;letter-spacing:-0.1px;left:1548.85px;width:800px;text-align:center;">Wed</div>
<div class="t" style="top:270.33px;font-size:16.5px;line-height:16.5px;color:#656c74;letter-spacing:-0.1px;left:1591.15px;width:800px;text-align:center;">Thu</div>
<div class="t" style="top:270.33px;font-size:16.5px;line-height:16.5px;color:#656c74;letter-spacing:-0.1px;left:1633.45px;width:800px;text-align:center;">Fri</div>
<div class="t" style="top:270.33px;font-size:16.5px;line-height:16.5px;color:#656c74;letter-spacing:-0.1px;left:1675.75px;width:800px;text-align:center;">Sat</div>
<div class="a" style="left:2012.30px;top:296.80px;width:84.60px;height:31.50px;background:#c9dbf2;border-radius:7px"></div>
<div class="a" style="left:2054.10px;top:296.80px;width:1.00px;height:31.50px;background:#d7e4f5"></div>
<div class="t" style="top:303.72px;font-size:19px;line-height:19px;color:#656c74;left:1421.95px;width:800px;text-align:center;">1</div>
<div class="t" style="top:303.72px;font-size:19px;line-height:19px;color:#656c74;left:1464.25px;width:800px;text-align:center;">2</div>
<div class="t" style="top:303.72px;font-size:19px;line-height:19px;color:#656c74;left:1506.55px;width:800px;text-align:center;">3</div>
<div class="t" style="top:303.72px;font-size:19px;line-height:19px;color:#656c74;left:1548.85px;width:800px;text-align:center;">4</div>
<div class="t" style="top:303.72px;font-size:19px;line-height:19px;color:#656c74;left:1591.15px;width:800px;text-align:center;">5</div>
<div class="a" style="left:2012.30px;top:296.80px;width:40.30px;height:31.50px;background:#3271bf;border-radius:7px"></div>
<div class="t" style="top:303.72px;font-size:19px;line-height:19px;color:#fff;left:1632.45px;width:800px;text-align:center;">6</div>
<div class="t" style="top:303.72px;font-size:19px;line-height:19px;color:#1c2b33;left:1675.75px;width:800px;text-align:center;">7</div>
<div class="a" style="left:1800.80px;top:336.85px;width:296.10px;height:31.50px;background:#c9dbf2;border-radius:7px"></div>
<div class="a" style="left:1842.60px;top:336.85px;width:1.00px;height:31.50px;background:#d7e4f5"></div>
<div class="a" style="left:1884.90px;top:336.85px;width:1.00px;height:31.50px;background:#d7e4f5"></div>
<div class="a" style="left:1927.20px;top:336.85px;width:1.00px;height:31.50px;background:#d7e4f5"></div>
<div class="a" style="left:1969.50px;top:336.85px;width:1.00px;height:31.50px;background:#d7e4f5"></div>
<div class="a" style="left:2011.80px;top:336.85px;width:1.00px;height:31.50px;background:#d7e4f5"></div>
<div class="a" style="left:2054.10px;top:336.85px;width:1.00px;height:31.50px;background:#d7e4f5"></div>
<div class="t" style="top:343.77px;font-size:19px;line-height:19px;color:#1c2b33;left:1421.95px;width:800px;text-align:center;">8</div>
<div class="t" style="top:343.77px;font-size:19px;line-height:19px;color:#1c2b33;left:1464.25px;width:800px;text-align:center;">9</div>
<div class="t" style="top:343.77px;font-size:19px;line-height:19px;color:#1c2b33;left:1506.55px;width:800px;text-align:center;">10</div>
<div class="t" style="top:343.77px;font-size:19px;line-height:19px;color:#1c2b33;left:1548.85px;width:800px;text-align:center;">11</div>
<div class="t" style="top:343.77px;font-size:19px;line-height:19px;color:#1c2b33;left:1591.15px;width:800px;text-align:center;">12</div>
<div class="t" style="top:343.77px;font-size:19px;line-height:19px;color:#1c2b33;left:1633.45px;width:800px;text-align:center;">13</div>
<div class="t" style="top:343.77px;font-size:19px;line-height:19px;color:#1c2b33;left:1675.75px;width:800px;text-align:center;">14</div>
<div class="a" style="left:1800.80px;top:376.90px;width:296.10px;height:31.50px;background:#c9dbf2;border-radius:7px"></div>
<div class="a" style="left:1842.60px;top:376.90px;width:1.00px;height:31.50px;background:#d7e4f5"></div>
<div class="a" style="left:1884.90px;top:376.90px;width:1.00px;height:31.50px;background:#d7e4f5"></div>
<div class="a" style="left:1927.20px;top:376.90px;width:1.00px;height:31.50px;background:#d7e4f5"></div>
<div class="a" style="left:1969.50px;top:376.90px;width:1.00px;height:31.50px;background:#d7e4f5"></div>
<div class="a" style="left:2011.80px;top:376.90px;width:1.00px;height:31.50px;background:#d7e4f5"></div>
<div class="a" style="left:2054.10px;top:376.90px;width:1.00px;height:31.50px;background:#d7e4f5"></div>
<div class="t" style="top:383.82px;font-size:19px;line-height:19px;color:#1c2b33;left:1421.95px;width:800px;text-align:center;">15</div>
<div class="t" style="top:383.82px;font-size:19px;line-height:19px;color:#1c2b33;left:1464.25px;width:800px;text-align:center;">16</div>
<div class="t" style="top:383.82px;font-size:19px;line-height:19px;color:#1c2b33;left:1506.55px;width:800px;text-align:center;">17</div>
<div class="t" style="top:383.82px;font-size:19px;line-height:19px;color:#1c2b33;left:1548.85px;width:800px;text-align:center;">18</div>
<div class="t" style="top:383.82px;font-size:19px;line-height:19px;color:#1c2b33;left:1591.15px;width:800px;text-align:center;">19</div>
<div class="t" style="top:383.82px;font-size:19px;line-height:19px;color:#1c2b33;left:1633.45px;width:800px;text-align:center;">20</div>
<div class="t" style="top:383.82px;font-size:19px;line-height:19px;color:#1c2b33;left:1675.75px;width:800px;text-align:center;">21</div>
<div class="a" style="left:1800.80px;top:416.95px;width:296.10px;height:31.50px;background:#c9dbf2;border-radius:7px"></div>
<div class="a" style="left:1842.60px;top:416.95px;width:1.00px;height:31.50px;background:#d7e4f5"></div>
<div class="a" style="left:1884.90px;top:416.95px;width:1.00px;height:31.50px;background:#d7e4f5"></div>
<div class="a" style="left:1927.20px;top:416.95px;width:1.00px;height:31.50px;background:#d7e4f5"></div>
<div class="a" style="left:1969.50px;top:416.95px;width:1.00px;height:31.50px;background:#d7e4f5"></div>
<div class="a" style="left:2011.80px;top:416.95px;width:1.00px;height:31.50px;background:#d7e4f5"></div>
<div class="a" style="left:2054.10px;top:416.95px;width:1.00px;height:31.50px;background:#d7e4f5"></div>
<div class="t" style="top:423.87px;font-size:19px;line-height:19px;color:#1c2b33;left:1421.95px;width:800px;text-align:center;">22</div>
<div class="t" style="top:423.87px;font-size:19px;line-height:19px;color:#1c2b33;left:1464.25px;width:800px;text-align:center;">23</div>
<div class="t" style="top:423.87px;font-size:19px;line-height:19px;color:#1c2b33;left:1506.55px;width:800px;text-align:center;">24</div>
<div class="t" style="top:423.87px;font-size:19px;line-height:19px;color:#1c2b33;left:1548.85px;width:800px;text-align:center;">25</div>
<div class="t" style="top:423.87px;font-size:19px;line-height:19px;color:#1c2b33;left:1591.15px;width:800px;text-align:center;">26</div>
<div class="t" style="top:423.87px;font-size:19px;line-height:19px;color:#1c2b33;left:1633.45px;width:800px;text-align:center;">27</div>
<div class="t" style="top:423.87px;font-size:19px;line-height:19px;color:#1c2b33;left:1675.75px;width:800px;text-align:center;">28</div>
<div class="a" style="left:1800.80px;top:457.00px;width:126.90px;height:31.50px;background:#c9dbf2;border-radius:7px"></div>
<div class="a" style="left:1842.60px;top:457.00px;width:1.00px;height:31.50px;background:#d7e4f5"></div>
<div class="a" style="left:1884.90px;top:457.00px;width:1.00px;height:31.50px;background:#d7e4f5"></div>
<div class="t" style="top:463.92px;font-size:19px;line-height:19px;color:#1c2b33;left:1421.95px;width:800px;text-align:center;">29</div>
<div class="t" style="top:463.92px;font-size:19px;line-height:19px;color:#1c2b33;left:1464.25px;width:800px;text-align:center;">30</div>
<div class="t" style="top:463.92px;font-size:19px;line-height:19px;color:#1c2b33;left:1506.55px;width:800px;text-align:center;">31</div>
<div class="t" style="top:223.92px;font-size:19px;line-height:19px;color:#1c2b33;left:2161.50px;">Feb</div>
<svg class="a" style="left:2207.50px;top:229.00px;" width="13" height="8" viewBox="0 0 13 8"><path d="M0.5 0.8 L12.5 0.8 L6.5 7.5 Z" fill="#1c2b33" stroke="#1c2b33" stroke-width="1" stroke-linejoin="round"/></svg>
<div class="t" style="top:223.92px;font-size:19px;line-height:19px;color:#1c2b33;left:2262.50px;">2023</div>
<svg class="a" style="left:2323.00px;top:229.00px;" width="13" height="8" viewBox="0 0 13 8"><path d="M0.5 0.8 L12.5 0.8 L6.5 7.5 Z" fill="#1c2b33" stroke="#1c2b33" stroke-width="1" stroke-linejoin="round"/></svg>
<div class="t" style="top:270.33px;font-size:16.5px;line-height:16.5px;color:#656c74;letter-spacing:-0.1px;left:1761.15px;width:800px;text-align:center;">Sun</div>
<div class="t" style="top:270.33px;font-size:16.5px;line-height:16.5px;color:#656c74;letter-spacing:-0.1px;left:1803.45px;width:800px;text-align:center;">Mon</div>
<div class="t" style="top:270.33px;font-size:16.5px;line-height:16.5px;color:#656c74;letter-spacing:-0.1px;left:1845.75px;width:800px;text-align:center;">Tue</div>
<div class="t" style="top:270.33px;font-size:16.5px;line-height:16.5px;color:#656c74;letter-spacing:-0.1px;left:1888.05px;width:800px;text-align:center;">Wed</div>
<div class="t" style="top:270.33px;font-size:16.5px;line-height:16.5px;color:#656c74;letter-spacing:-0.1px;left:1930.35px;width:800px;text-align:center;">Thu</div>
<div class="t" style="top:270.33px;font-size:16.5px;line-height:16.5px;color:#656c74;letter-spacing:-0.1px;left:1972.65px;width:800px;text-align:center;">Fri</div>
<div class="t" style="top:270.33px;font-size:16.5px;line-height:16.5px;color:#656c74;letter-spacing:-0.1px;left:2014.95px;width:800px;text-align:center;">Sat</div>
<div class="a" style="left:2266.90px;top:296.80px;width:169.20px;height:31.50px;background:#c9dbf2;border-radius:7px"></div>
<div class="a" style="left:2308.70px;top:296.80px;width:1.00px;height:31.50px;background:#d7e4f5"></div>
<div class="a" style="left:2351.00px;top:296.80px;width:1.00px;height:31.50px;background:#d7e4f5"></div>
<div class="a" style="left:2393.30px;top:296.80px;width:1.00px;height:31.50px;background:#d7e4f5"></div>
<div class="t" style="top:303.72px;font-size:19px;line-height:19px;color:#1c2b33;left:1888.05px;width:800px;text-align:center;">1</div>
<div class="t" style="top:303.72px;font-size:19px;line-height:19px;color:#1c2b33;left:1930.35px;width:800px;text-align:center;">2</div>
<div class="t" style="top:303.72px;font-size:19px;line-height:19px;color:#1c2b33;left:1972.65px;width:800px;text-align:center;">3</div>
<div class="t" style="top:303.72px;font-size:19px;line-height:19px;color:#1c2b33;left:2014.95px;width:800px;text-align:center;">4</div>
<div class="a" style="left:2140.00px;top:336.85px;width:296.10px;height:31.50px;background:#c9dbf2;border-radius:7px"></div>
<div class="a" style="left:2181.80px;top:336.85px;width:1.00px;height:31.50px;background:#d7e4f5"></div>
<div class="a" style="left:2224.10px;top:336.85px;width:1.00px;height:31.50px;background:#d7e4f5"></div>
<div class="a" style="left:2266.40px;top:336.85px;width:1.00px;height:31.50px;background:#d7e4f5"></div>
<div class="a" style="left:2308.70px;top:336.85px;width:1.00px;height:31.50px;background:#d7e4f5"></div>
<div class="a" style="left:2351.00px;top:336.85px;width:1.00px;height:31.50px;background:#d7e4f5"></div>
<div class="a" style="left:2393.30px;top:336.85px;width:1.00px;height:31.50px;background:#d7e4f5"></div>
<div class="t" style="top:343.77px;font-size:19px;line-height:19px;color:#1c2b33;left:1761.15px;width:800px;text-align:center;">5</div>
<div class="t" style="top:343.77px;font-size:19px;line-height:19px;color:#1c2b33;left:1803.45px;width:800px;text-align:center;">6</div>
<div class="t" style="top:343.77px;font-size:19px;line-height:19px;color:#1c2b33;left:1845.75px;width:800px;text-align:center;">7</div>
<div class="t" style="top:343.77px;font-size:19px;line-height:19px;color:#1c2b33;left:1888.05px;width:800px;text-align:center;">8</div>
<div class="t" style="top:343.77px;font-size:19px;line-height:19px;color:#1c2b33;left:1930.35px;width:800px;text-align:center;">9</div>
<div class="t" style="top:343.77px;font-size:19px;line-height:19px;color:#1c2b33;left:1972.65px;width:800px;text-align:center;">10</div>
<div class="t" style="top:343.77px;font-size:19px;line-height:19px;color:#1c2b33;left:2014.95px;width:800px;text-align:center;">11</div>
<div class="a" style="left:2140.00px;top:376.90px;width:296.10px;height:31.50px;background:#c9dbf2;border-radius:7px"></div>
<div class="a" style="left:2181.80px;top:376.90px;width:1.00px;height:31.50px;background:#d7e4f5"></div>
<div class="a" style="left:2224.10px;top:376.90px;width:1.00px;height:31.50px;background:#d7e4f5"></div>
<div class="a" style="left:2266.40px;top:376.90px;width:1.00px;height:31.50px;background:#d7e4f5"></div>
<div class="a" style="left:2308.70px;top:376.90px;width:1.00px;height:31.50px;background:#d7e4f5"></div>
<div class="a" style="left:2351.00px;top:376.90px;width:1.00px;height:31.50px;background:#d7e4f5"></div>
<div class="a" style="left:2393.30px;top:376.90px;width:1.00px;height:31.50px;background:#d7e4f5"></div>
<div class="t" style="top:383.82px;font-size:19px;line-height:19px;color:#1c2b33;left:1761.15px;width:800px;text-align:center;">12</div>
<div class="t" style="top:383.82px;font-size:19px;line-height:19px;color:#1c2b33;left:1803.45px;width:800px;text-align:center;">13</div>
<div class="t" style="top:383.82px;font-size:19px;line-height:19px;color:#1c2b33;left:1845.75px;width:800px;text-align:center;">14</div>
<div class="t" style="top:383.82px;font-size:19px;line-height:19px;color:#1c2b33;left:1888.05px;width:800px;text-align:center;">15</div>
<div class="t" style="top:383.82px;font-size:19px;line-height:19px;color:#1c2b33;left:1930.35px;width:800px;text-align:center;">16</div>
<div class="t" style="top:383.82px;font-size:19px;line-height:19px;color:#1c2b33;left:1972.65px;width:800px;text-align:center;">17</div>
<div class="t" style="top:383.82px;font-size:19px;line-height:19px;color:#1c2b33;left:2014.95px;width:800px;text-align:center;">18</div>
<div class="a" style="left:2140.00px;top:416.95px;width:296.10px;height:31.50px;background:#c9dbf2;border-radius:7px"></div>
<div class="a" style="left:2181.80px;top:416.95px;width:1.00px;height:31.50px;background:#d7e4f5"></div>
<div class="a" style="left:2224.10px;top:416.95px;width:1.00px;height:31.50px;background:#d7e4f5"></div>
<div class="a" style="left:2266.40px;top:416.95px;width:1.00px;height:31.50px;background:#d7e4f5"></div>
<div class="a" style="left:2308.70px;top:416.95px;width:1.00px;height:31.50px;background:#d7e4f5"></div>
<div class="a" style="left:2351.00px;top:416.95px;width:1.00px;height:31.50px;background:#d7e4f5"></div>
<div class="a" style="left:2393.30px;top:416.95px;width:1.00px;height:31.50px;background:#d7e4f5"></div>
<div class="t" style="top:423.87px;font-size:19px;line-height:19px;color:#1c2b33;left:1761.15px;width:800px;text-align:center;">19</div>
<div class="t" style="top:423.87px;font-size:19px;line-height:19px;color:#1c2b33;left:1803.45px;width:800px;text-align:center;">20</div>
<div class="t" style="top:423.87px;font-size:19px;line-height:19px;color:#1c2b33;left:1845.75px;width:800px;text-align:center;">21</div>
<div class="t" style="top:423.87px;font-size:19px;line-height:19px;color:#1c2b33;left:1888.05px;width:800px;text-align:center;">22</div>
<div class="t" style="top:423.87px;font-size:19px;line-height:19px;color:#1c2b33;left:1930.35px;width:800px;text-align:center;">23</div>
<div class="t" style="top:423.87px;font-size:19px;line-height:19px;color:#1c2b33;left:1972.65px;width:800px;text-align:center;">24</div>
<div class="t" style="top:423.87px;font-size:19px;line-height:19px;color:#1c2b33;left:2014.95px;width:800px;text-align:center;">25</div>
<div class="a" style="left:2140.00px;top:457.00px;width:126.90px;height:31.50px;background:#c9dbf2;border-radius:7px"></div>
<div class="a" style="left:2181.80px;top:457.00px;width:1.00px;height:31.50px;background:#d7e4f5"></div>
<div class="a" style="left:2224.10px;top:457.00px;width:1.00px;height:31.50px;background:#d7e4f5"></div>
<div class="t" style="top:463.92px;font-size:19px;line-height:19px;color:#1c2b33;left:1761.15px;width:800px;text-align:center;">26</div>
<div class="t" style="top:463.92px;font-size:19px;line-height:19px;color:#1c2b33;left:1803.45px;width:800px;text-align:center;">27</div>
<div class="t" style="top:463.92px;font-size:19px;line-height:19px;color:#1c2b33;left:1845.75px;width:800px;text-align:center;">28</div>
<svg class="a" style="left:1813.00px;top:222.00px;" width="14" height="21" viewBox="0 0 14 21"><path d="M11.5 1.5 L2.5 10.5 L11.5 19.5" fill="none" stroke="#50595f" stroke-width="1.6" stroke-linecap="round" stroke-linejoin="round"/></svg>
<svg class="a" style="left:2409.00px;top:222.00px;" width="14" height="21" viewBox="0 0 14 21"><path d="M2.5 1.5 L11.5 10.5 L2.5 19.5" fill="none" stroke="#1c2b33" stroke-width="1.6" stroke-linecap="round" stroke-linejoin="round"/></svg>
<div class="btn" style="left:2218px;top:702px;width:101px;height:47.5px;border-color:#c6ccd3"></div>
<div class="t" style="top:717.92px;font-size:19px;line-height:19px;color:#1c2b33;left:1868.50px;width:800px;text-align:center;">Cancel</div>
<div class="a" style="left:2329.5px;top:702px;width:106.5px;height:47.5px;background:#3575bd;border-radius:7px"></div>
<div class="t" style="top:717.92px;font-size:19px;line-height:19px;color:#fff;left:1983.00px;width:800px;text-align:center;">Update</div>
<div class="t" style="top:771.92px;font-size:19px;line-height:19px;color:#1c2b33;letter-spacing:-0.1px;left:1799.00px;">6 Jan 2023 - 6 Feb 2026</div>
<div class="t" style="top:795.53px;font-size:16.5px;line-height:16.5px;color:#656c74;letter-spacing:-0.1px;left:1801.50px;">Dates are shown in Kolkata Time</div></div></body></html>
